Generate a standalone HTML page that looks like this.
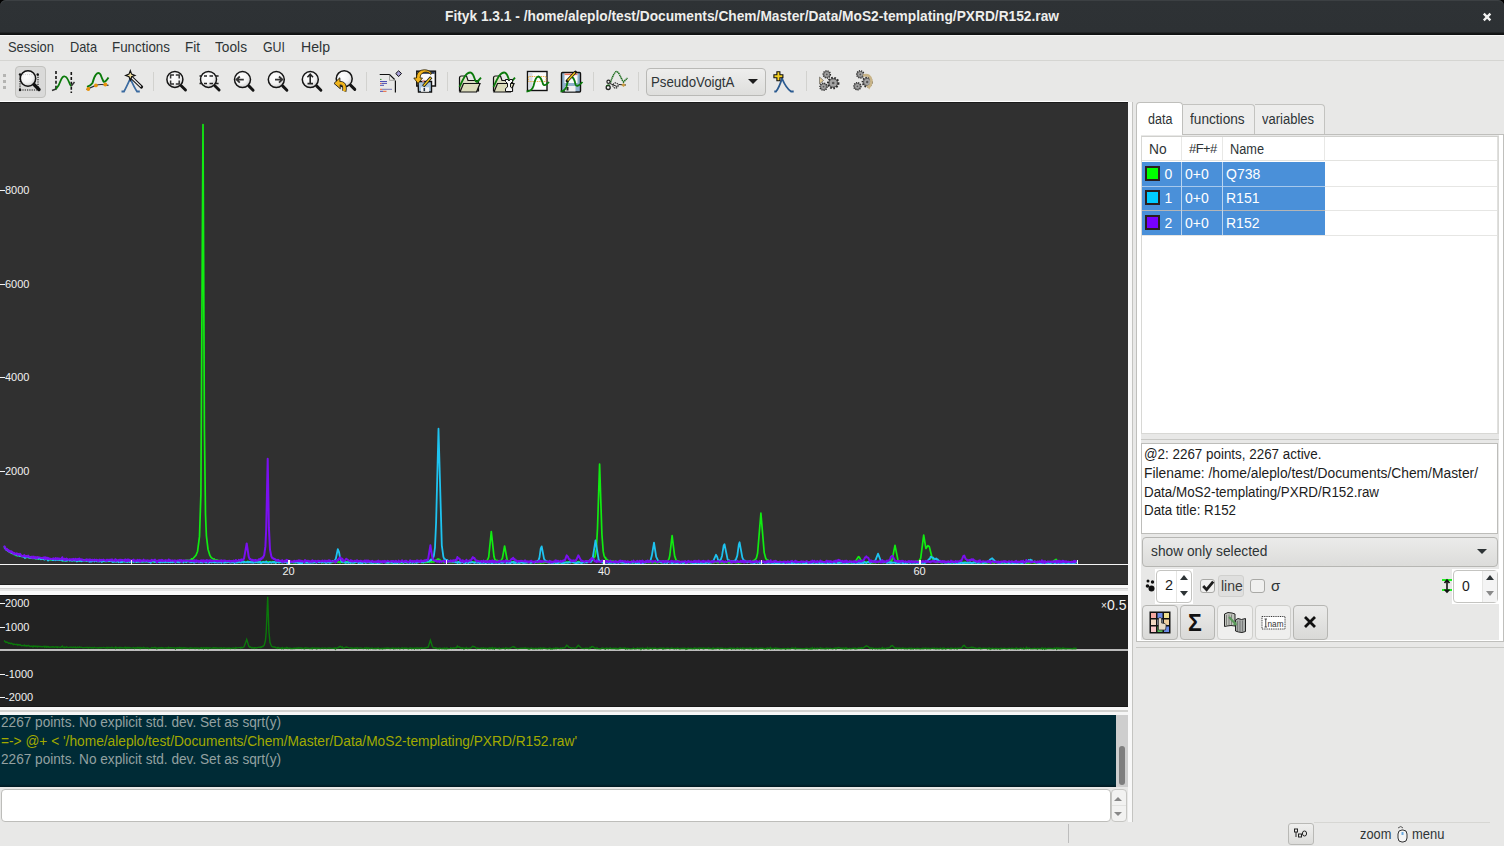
<!DOCTYPE html>
<html><head><meta charset="utf-8">
<style>
*{box-sizing:border-box}
html,body{margin:0;padding:0}
body{width:1504px;height:846px;overflow:hidden;position:relative;background:#e8e8e7;font-family:"Liberation Sans",sans-serif;color:#2e3436}
.a{position:absolute}
.t{position:absolute;white-space:nowrap;line-height:1}
</style></head><body>
<!-- title bar -->
<div class="a" style="left:0;top:0;width:1504px;height:10px;background:#000"></div>
<div class="a" style="left:0;top:0;width:1504px;height:35px;background:linear-gradient(#2e3235 0,#2d3134 32px,#161818 33px,#0e1010 35px);border-radius:6px 6px 0 0;box-shadow:inset 0 1px 0 #3c4043"></div>
<div class="t" style="left:445px;top:9.3px;font-size:14px;font-weight:bold;color:#eeeeec;transform:scaleX(0.9816);transform-origin:0 0">Fityk 1.3.1 - /home/aleplo/test/Documents/Chem/Master/Data/MoS2-templating/PXRD/R152.raw</div>
<svg class="a" style="left:1480px;top:10px" width="14" height="14" viewBox="0 0 14 14"><path d="M3.8 3.6 L10.4 10.4 M10.4 3.6 L3.8 10.4" stroke="#f2f2f2" stroke-width="2.3"/></svg>
<!-- menubar -->
<div class="a" style="left:0;top:35px;width:1504px;height:1px;background:#f7f7f7"></div>
<div class="a" style="left:0;top:60px;width:1504px;height:1px;background:#d5d5d2"></div>
<div class="t" style="left:8px;top:40px;font-size:14.2px;transform:scaleX(0.9112);transform-origin:0 0">Session</div>
<div class="t" style="left:70px;top:40px;font-size:14.2px;transform:scaleX(0.9009);transform-origin:0 0">Data</div>
<div class="t" style="left:112px;top:40px;font-size:14.2px;transform:scaleX(0.9428);transform-origin:0 0">Functions</div>
<div class="t" style="left:185px;top:40px;font-size:14.2px;transform:scaleX(0.9514);transform-origin:0 0">Fit</div>
<div class="t" style="left:215px;top:40px;font-size:14.2px;transform:scaleX(0.9660);transform-origin:0 0">Tools</div>
<div class="t" style="left:263px;top:40px;font-size:14.2px;transform:scaleX(0.8718);transform-origin:0 0">GUI</div>
<div class="t" style="left:301px;top:40px;font-size:14.2px;transform:scaleX(0.9936);transform-origin:0 0">Help</div>
<!-- toolbar -->
<div class="a" style="left:0;top:101px;width:1128px;height:1px;background:#fdfdfd"></div>
<div class="a" style="left:15px;top:66px;width:31px;height:32px;background:#dadad9;border:1px solid #c2c2bf;border-radius:4px"></div>
<div class="a" style="left:646px;top:68px;width:120px;height:28px;background:linear-gradient(#eeeeed,#dededc);border:1px solid #b9b9b6;border-radius:4px"></div>
<div class="t" style="left:650.5px;top:75px;font-size:14px;color:#2e3436;transform:scaleX(0.9481);transform-origin:0 0">PseudoVoigtA</div>
<div class="a" style="left:748px;top:79px;width:0;height:0;border-left:5px solid transparent;border-right:5px solid transparent;border-top:5px solid #1c1c1c"></div>
<svg class="a" style="left:0;top:60px" width="900" height="42" viewBox="0 60 900 42">
<defs>
<radialGradient id="glass" cx="0.4" cy="0.35" r="0.7"><stop offset="0" stop-color="#ffffff"/><stop offset="0.6" stop-color="#f2f2f2"/><stop offset="1" stop-color="#c8c8c8"/></radialGradient>
<linearGradient id="fold" x1="0" y1="0" x2="0" y2="1"><stop offset="0" stop-color="#f0f0dc"/><stop offset="1" stop-color="#b8b89a"/></linearGradient>
<g id="mag"><circle cx="0" cy="0" r="8" fill="url(#glass)" stroke="#151515" stroke-width="1.5"/><path d="M6.3 6.3 L10.6 10.6" stroke="#151515" stroke-width="2.9" stroke-linecap="round"/></g>
<g id="gear"><circle r="3.5" fill="#8a8a8a" stroke="#2a2a2a" stroke-width="1.6" stroke-dasharray="1.1 1.0"/><circle r="2.8" fill="#a4a4a4" stroke="#444" stroke-width="0.5"/><circle r="0.9" fill="#555"/></g>
</defs>
<!-- grip -->
<g fill="#b4b4b2"><rect x="3" y="74" width="3" height="3"/><rect x="3" y="80" width="3" height="3"/><rect x="3" y="86" width="3" height="3"/></g>
<!-- separators -->
<g fill="#d2d2cf"><rect x="153" y="72" width="1" height="19"/><rect x="366" y="72" width="1" height="19"/><rect x="447" y="72" width="1" height="19"/><rect x="593" y="72" width="1" height="19"/><rect x="638" y="72" width="1" height="19"/><rect x="806" y="71" width="1" height="20"/></g>
<!-- icon1 zoom box -->
<g stroke="#111" stroke-width="1.1" stroke-dasharray="1.2 1.1" fill="none"><path d="M20 74 L20 90 L38 90 L38 74"/></g>
<g fill="#111"><circle cx="20" cy="74.5" r="1.2"/><circle cx="37.7" cy="74.5" r="1.2"/><circle cx="20" cy="90" r="1.2"/></g>
<circle cx="28" cy="78.5" r="7.7" fill="url(#glass)" stroke="#111" stroke-width="1.55"/><path d="M23 74.6 H33" stroke="#bbb" stroke-width="0.6" stroke-dasharray="1 1"/>
<path d="M34 84.5 L39 89.5" stroke="#111" stroke-width="3.4" stroke-linecap="round"/>
<!-- icon2 range -->
<g stroke="#151515" stroke-width="1.6" stroke-dasharray="3 1.9"><path d="M56 71 V89"/><path d="M71.3 72 V93"/></g>
<path d="M55.5 89.5 Q59 86 60.5 81 Q62.5 75.5 65 76.5 Q67 77 69 82 Q70.5 86 71.3 86" stroke="#0a7a0a" stroke-width="1.8" fill="none"/>
<path d="M71.3 86 L74.5 82" stroke="#333" stroke-width="1.5"/><path d="M52 90.5 L56 89" stroke="#333" stroke-width="1.6"/>
<!-- icon3 baseline -->
<path d="M87 86.8 Q91 85.5 92.5 83 Q94 77 96 74.5 Q98.5 71.5 100.5 74.5 Q102 78.5 103.5 81.5 Q105 83 108.5 77.5" stroke="#0a7a0a" stroke-width="1.9" fill="none"/>
<path d="M86.5 89.5 L95.8 85.4 Q100 83.6 108.5 85.3" stroke="#2a2a3a" stroke-width="1.2" fill="none"/>
<g fill="#e8920a"><circle cx="88.3" cy="89" r="1.9"/><circle cx="95.9" cy="85.4" r="1.9"/><circle cx="105.3" cy="84.5" r="1.9"/></g>
<!-- icon4 wand peak -->
<path d="M121.5 91.5 L124 91.5 Q126 88 130.3 78.5 Q134.5 88 137 91.5 L139.8 91.5" stroke="#3a6aa0" stroke-width="1.8" fill="none"/>
<path d="M131.5 77.5 L141.5 87" stroke="#111" stroke-width="3.2" stroke-linecap="round"/><path d="M131.8 77.8 L141 86.6" stroke="#f4f4f4" stroke-width="1.3"/>
<path d="M130.3 70.5 L131.6 74.1 L135 75.4 L131.6 76.7 L130.3 80.3 L129 76.7 L125.6 75.4 L129 74.1 Z" fill="#f5e3a0" stroke="#111" stroke-width="1.1"/>
<!-- zoom icons -->
<use href="#mag" x="174.9" y="79.4"/>
<g stroke="#333" stroke-width="1.5" fill="none"><path d="M170.6 78.4 V75 H174 M175.8 75 H179.2 V78.4 M170.6 80.6 V84 H174 M175.8 84 H179.2 V80.6"/></g>
<use href="#mag" x="208.5" y="79.4"/>
<g stroke="#222" stroke-width="1.7"><path d="M199.5 76 H202 M204 76 H207 M209.5 76 H213 M216 76 H218.6 M199.5 83.5 H202 M204 83.5 H207 M209.5 83.5 H213 M216 83.5 H218.6"/></g>
<use href="#mag" x="242.5" y="79.6"/>
<path d="M243.8 79.6 H237 M239.8 76.5 L236.5 79.6 L239.8 82.7" stroke="#333" stroke-width="1.8" fill="none"/>
<use href="#mag" x="276.3" y="79.6"/>
<path d="M275 79.6 H281.8 M279 76.5 L282.3 79.6 L279 82.7" stroke="#333" stroke-width="1.8" fill="none"/>
<use href="#mag" x="310.3" y="79.6"/>
<path d="M310.2 74.5 V83.3 M307.4 77.2 L310.2 74.2 L313 77.2 M307.5 83.6 H313" stroke="#222" stroke-width="1.6" fill="none"/>
<use href="#mag" x="344.2" y="78.8"/>
<path d="M338 83.4 Q343.5 82.2 344.4 86.6 Q344.8 89.5 344.2 91.3" fill="none" stroke="#1a1a1a" stroke-width="4.4"/><path d="M334 83.4 L339.8 77.8 L340.3 88.8 Z" fill="#f0b41c" stroke="#1a1a1a" stroke-width="0.9" stroke-linejoin="round"/><path d="M338 83.4 Q343.5 82.2 344.4 86.6 Q344.8 89.5 344.2 91.3" fill="none" stroke="#f0b41c" stroke-width="2.8"/>
<!-- doc icon -->
<path d="M379.7 74.5 H389.6 L394.6 79.5 M395.4 80.5 V92.5" stroke="#111" stroke-width="1.2" fill="none"/>
<path d="M389.5 74.5 V80.3 H395.4" stroke="#777" stroke-width="0.6" fill="none"/>
<g stroke-width="0.9"><path d="M380 79.4 H381.5" stroke="#2a8a2a"/><path d="M380 81.5 H387" stroke="#3a3aaa"/><path d="M380 83.4 H381.5" stroke="#e85020"/><path d="M381.5 83.4 H387" stroke="#3a3aaa"/><path d="M380 85.3 H384" stroke="#3a3aaa"/><path d="M380 89.3 H382" stroke="#e85020"/><path d="M382 89.3 H392" stroke="#6a6aaa"/><path d="M380 91.3 H383" stroke="#3a3aaa"/><path d="M383 91.3 H386.5" stroke="#e85020"/></g>
<path d="M398.6 70.8 L401.5 73.5 L398.6 76.6 L395.8 73.5 Z" fill="#a8a0d8" stroke="#111" stroke-width="1"/>
<!-- session icon -->
<rect x="416.8" y="71.2" width="18.6" height="14.8" fill="#fafafa" stroke="#111" stroke-width="1.5"/>
<rect x="417.5" y="71.8" width="17.2" height="2" fill="#2a3a5a"/>
<path d="M418 81.5 H431.5 V92 H418.5 Z" fill="#a8c4dc" stroke="#111" stroke-width="1.4"/>
<rect x="421" y="87.3" width="8" height="4.5" fill="#f4f4f4"/><rect x="423.5" y="88" width="1.6" height="3.2" fill="#234"/>
<path d="M431 74.5 Q427 70.5 422.5 73 Q420 74.5 420 78 L422.5 78 L418 83.5 L413.8 78 L416.5 78 Q416.5 72 421.5 70.2 Q427.5 68.5 431.5 73 Z" fill="#f2b41c" stroke="#2a2000" stroke-width="0.8"/>
<path d="M423.2 86.3 L431.2 77.3" stroke="#111" stroke-width="3"/><path d="M423.6 85.8 L430.8 77.8" stroke="#f2c81a" stroke-width="1.4"/><path d="M422.5 82 L424.5 80" stroke="#e89090" stroke-width="1.6"/>
<!-- folder1 -->
<g id="folder">
<path d="M459.5 91 V78 Q459.5 76 461.5 76 H466.5 L468 80.5 H478.5 V91 Z" fill="url(#fold)" stroke="#111" stroke-width="1.2"/>
<path d="M460 92 L463.5 83.5 H480 L476.5 92 Z" fill="#dcdcbc" stroke="#111" stroke-width="1.2"/>
</g>
<path d="M459.5 87 Q462.5 80 465 76 Q468 72 470.9 72.6 Q473 73.5 474.4 78 Q475.5 82 477 82 Q479 80 481 77.6" stroke="#0a7a0a" stroke-width="1.8" fill="none"/>
<use href="#folder" x="34"/>
<path d="M493.5 87 Q496.5 80 499 76 Q502 72 504.9 72.6 Q507 73.5 508.4 78 Q509.5 82 511 82 Q513 80 515 77.6" stroke="#0a7a0a" stroke-width="1.8" fill="none"/>
<path d="M505.5 79.5 H508 L509 81 L510 79.5 H512.5 V81.5 L510.5 83.5 V87 L512.5 88.5 V91.5 H505.5 V88.5 L507.5 87 V83.5 L505.5 81.5 Z" fill="#f6f6f6" stroke="#111" stroke-width="1"/>
<!-- chart icon -->
<rect x="527.5" y="71.5" width="19.5" height="19" fill="#fbfbfb" stroke="#111" stroke-width="1.4"/>
<rect x="528.5" y="72.5" width="4" height="16" fill="#d8dce4"/>
<rect x="528.5" y="76.5" width="17.5" height="5" fill="none" stroke="#e8a020" stroke-width="0.9" stroke-dasharray="1 0.8"/>
<path d="M526.5 91.5 Q532 91 533.5 86 Q535.5 76.5 538.5 76.5 Q541 77 543 84 Q544.5 87 549 82" stroke="#0a7a0a" stroke-width="1.8" fill="none"/>
<!-- floppy icon -->
<rect x="561.5" y="72.5" width="19" height="19.5" rx="1" fill="#8fb0cc" stroke="#111" stroke-width="1.4"/>
<rect x="564.5" y="73.5" width="13" height="9.5" fill="#fafafa"/><rect x="564.5" y="73.5" width="13" height="1.6" fill="#f07a60"/>
<rect x="565" y="86" width="10.5" height="5.5" fill="#f0f0f0"/><rect x="566.5" y="87" width="2" height="3.5" fill="#222"/>
<path d="M560.5 91.5 Q565 91 566.5 86.5 Q568.5 77 571.5 77 Q574 77 575.5 84.5 Q577 88 582.5 82" stroke="#0a7a0a" stroke-width="1.8" fill="none"/>
<path d="M567 81 L575.5 72" stroke="#111" stroke-width="2.8" stroke-linecap="round"/><path d="M567.6 80.4 L575 72.6" stroke="#f2c81a" stroke-width="1.4"/>
<!-- scissors chart -->
<path d="M610.5 82.5 Q612.5 76 615 72.5 Q617 70 619.5 74.5 Q621 78 623.5 82 L627.5 78" stroke="#1a6a1a" stroke-width="1.5" fill="none" stroke-dasharray="1.4 0.5"/>
<circle cx="608.5" cy="81.8" r="1.6" fill="#f4f4f4" stroke="#222" stroke-width="1.2"/>
<circle cx="608.2" cy="87.5" r="2" fill="#f4f4f4" stroke="#222" stroke-width="1.3"/><path d="M606 86 Q607.5 84.5 610 85" stroke="#1a6a1a" stroke-width="1"/>
<circle cx="615.5" cy="85.5" r="2.6" fill="none" stroke="#333" stroke-width="1.2" stroke-dasharray="1.5 0.7"/>
<path d="M610 83.5 L617 86.5 M618.5 84.5 L626 85" stroke="#222" stroke-width="1"/>
<rect x="622" y="83.5" width="3" height="3" transform="rotate(45 623.5 85)" fill="#c89a40"/>
<!-- add peak -->
<path d="M774.3 91.5 L776 91.5 Q779 88 782 78.5 Q786 88 791 91.5 L793.7 91.5" stroke="#2a5a90" stroke-width="1.8" fill="none"/>
<path d="M776.9 71.8 H779.9 V74.8 H782.9 V77.8 H779.9 V80.8 H776.9 V77.8 H773.9 V74.8 H776.9 Z" fill="#f5d020" stroke="#111" stroke-width="1.1"/>
<!-- gears 1 -->
<path d="M819.5 77 L823.5 80.5 L819.5 84 Z" fill="#e0c890" stroke="#555" stroke-width="0.6"/>
<use href="#gear" x="826.8" y="74.4"/><use href="#gear" x="823.5" y="86.7"/>
<g transform="translate(833.2 83) scale(1.45)"><use href="#gear"/></g>
<!-- gears 2 -->
<use href="#gear" x="860.3" y="74.4"/><use href="#gear" x="857.4" y="86.3"/>
<g transform="translate(867.2 82) scale(1.3)"><use href="#gear"/></g>
<path d="M863 75.5 Q870.5 73.5 871.5 81 Q871.5 85 868.5 87.5" fill="none" stroke="#c8b488" stroke-width="2.6"/><path d="M866 86 L869.5 89.5 L870.5 84.5 Z" fill="#c8b488"/>
</svg>

<!-- main plot -->
<div class="a" style="left:0;top:102px;width:1128px;height:483px;background:#303030;border-top:1px solid #1a1a1a;border-bottom:1px solid #202020"></div>

<!-- sash -->
<div class="a" style="left:0;top:585px;width:1128px;height:10px;background:linear-gradient(#f8f8f8 0,#f8f8f8 3px,#cfcfcf 3px,#cfcfcf 4px,#e6e6e6 4px,#e6e6e6 6px,#fafafa 6px)"></div>
<!-- residual plot -->
<div class="a" style="left:0;top:595px;width:1128px;height:112px;background:#222222;border-top:1px solid #141414;border-bottom:1px solid #181818"></div>
<div class="a" style="left:0;top:707px;width:1128px;height:8px;background:linear-gradient(#f8f8f8 0,#f8f8f8 3px,#d2d2d0 3px,#d2d2d0 5px,#f6f6f6 5px)"></div>
<!-- console -->
<div class="a" style="left:0;top:715px;width:1116px;height:72px;background:linear-gradient(#002b36 0,#002b36 69px,#001820 72px)"></div>
<div class="a" style="left:1116px;top:715px;width:12px;height:72px;background:#cecece"></div>
<div class="a" style="left:1119px;top:746px;width:6px;height:39px;background:#7e7e7e;border-radius:3px"></div>
<div class="t" style="left:1px;top:715px;font-size:14px;color:#93a1a1;transform:scaleX(0.9734);transform-origin:0 0">2267 points. No explicit std. dev. Set as sqrt(y)</div>
<div class="t" style="left:1px;top:733.5px;font-size:14px;color:#a2aa00;transform:scaleX(0.9803);transform-origin:0 0">=-&gt; @+ &lt; '/home/aleplo/test/Documents/Chem/Master/Data/MoS2-templating/PXRD/R152.raw'</div>
<div class="t" style="left:1px;top:752px;font-size:14px;color:#93a1a1;transform:scaleX(0.9734);transform-origin:0 0">2267 points. No explicit std. dev. Set as sqrt(y)</div>
<!-- input -->
<div class="a" style="left:1px;top:789px;width:1110px;height:33px;background:#fff;border:1px solid #bdbdba;border-radius:4px"></div>
<div class="a" style="left:1111px;top:789px;width:16px;height:33px;background:#f2f2f1;border:1px solid #c6c6c3;border-radius:4px"></div>

<svg class="a" style="left:0;top:0" width="1128" height="846" viewBox="0 0 1128 846">
<g fill="none" stroke-linejoin="round">
<polyline stroke="#11ec11" stroke-width="1.7" points="4.1,547.4 8.3,551.4 10.2,552.6 11.1,552.6 12.6,554.0 15.4,554.5 16.4,555.6 17.3,555.2 19.7,556.0 20.1,555.6 20.6,556.3 21.6,556.0 23.9,557.1 24.9,556.5 25.3,557.4 25.8,556.8 26.8,557.4 27.2,556.7 28.2,557.7 31.5,557.4 32.0,558.1 33.9,558.5 35.8,558.0 36.2,558.7 37.2,558.3 37.7,559.1 39.1,558.3 40.5,558.9 41.4,558.4 41.9,559.0 44.3,559.4 45.7,558.8 49.0,559.2 49.5,559.7 50.0,559.3 50.9,560.0 52.8,558.9 53.3,559.8 56.1,559.5 57.1,560.1 59.4,560.1 59.9,559.6 62.3,560.6 63.2,559.9 63.7,560.6 64.2,559.8 64.6,560.6 65.1,559.9 67.0,560.6 67.9,559.8 69.8,560.5 70.3,560.0 72.7,560.7 73.1,560.0 77.9,560.9 78.8,560.1 79.8,560.8 80.7,560.2 81.2,561.0 81.7,560.6 82.6,561.1 83.1,560.4 86.9,561.0 87.3,560.3 87.8,560.9 92.1,560.5 94.0,561.2 94.4,560.6 97.8,561.0 98.2,560.5 98.7,561.3 100.6,560.4 102.0,561.5 102.5,560.8 103.0,561.3 103.9,560.8 104.9,561.6 105.3,561.0 107.7,561.5 108.2,561.1 109.1,561.5 109.6,560.9 113.4,561.4 114.8,560.6 115.3,561.6 115.7,560.9 117.2,561.6 118.1,561.0 119.5,561.3 120.0,560.9 120.9,561.8 121.4,561.4 122.4,562.2 123.3,560.9 124.3,561.6 125.2,561.0 129.0,561.6 130.4,561.0 130.9,561.7 131.8,561.3 132.3,561.7 132.8,560.9 133.7,561.5 134.7,561.2 135.1,562.1 135.6,561.3 137.0,561.7 139.9,561.0 141.3,561.9 141.8,561.0 144.6,561.5 146.0,561.0 147.9,561.6 148.4,561.0 150.3,561.8 151.2,561.2 153.6,561.9 156.4,561.0 156.9,561.5 158.8,561.7 159.7,560.9 160.2,561.5 161.6,561.4 162.1,561.8 163.1,561.1 163.5,561.7 164.0,561.1 165.0,561.4 165.9,560.9 167.3,561.8 168.3,561.0 169.2,561.7 173.9,561.4 174.9,560.8 176.3,561.7 176.8,561.1 177.3,561.8 178.2,561.0 179.6,561.6 181.5,560.4 182.9,561.3 185.3,561.0 185.8,560.4 190.0,560.2 191.9,558.8 192.4,559.3 196.0,555.3 197.6,551.2 199.5,536.4 200.9,494.4 203.0,124.5 204.4,428.8 205.5,514.1 206.4,535.8 208.0,549.2 209.9,555.4 211.3,557.6 213.7,559.2 214.2,558.8 214.6,559.7 217.5,560.2 218.4,560.8 219.9,560.5 221.3,561.4 221.7,560.8 222.7,561.6 223.6,560.9 224.1,561.6 227.4,561.2 229.8,562.0 230.3,561.0 230.7,561.6 232.6,561.6 233.1,561.1 234.0,562.1 235.9,561.5 236.9,562.1 237.8,561.3 238.3,562.5 238.8,561.6 239.3,562.1 239.7,561.5 241.1,562.2 242.1,561.4 244.0,562.4 244.9,561.8 246.4,562.2 248.2,561.4 249.2,562.1 251.6,562.2 252.0,561.7 256.8,562.3 257.2,561.9 259.1,562.6 259.6,561.9 263.9,562.3 266.2,561.9 266.7,562.5 267.2,561.9 270.0,561.8 271.4,562.5 272.4,561.7 273.8,562.5 274.3,561.8 275.2,562.8 275.7,561.9 276.6,562.4 277.6,561.7 278.1,562.2 279.0,561.6 280.9,562.4 285.6,561.8 288.0,562.6 288.5,561.9 291.8,562.7 292.7,561.9 293.7,562.3 294.6,561.9 295.1,562.9 295.6,562.2 297.0,561.6 299.4,562.3 300.8,561.6 301.3,562.2 303.6,561.7 304.1,562.4 306.0,561.9 306.5,562.6 307.4,562.1 308.3,562.6 308.8,561.9 310.2,562.3 311.7,561.9 312.1,562.4 314.0,562.0 315.0,562.4 316.4,561.9 317.3,562.3 318.3,561.6 319.2,562.2 320.2,561.8 321.1,562.5 322.1,562.1 323.0,562.7 324.0,562.0 328.2,562.5 328.7,561.9 329.6,562.4 331.1,562.0 331.5,562.7 333.0,561.5 333.9,562.2 334.9,561.6 335.3,562.3 336.3,561.9 337.7,562.4 338.6,561.7 340.1,562.8 340.5,562.0 342.0,562.0 342.9,562.7 343.4,562.1 345.3,562.3 345.7,562.9 346.2,561.9 347.6,561.7 348.6,562.7 350.5,562.2 350.9,562.8 351.4,562.1 351.9,562.7 352.4,562.2 355.2,562.7 356.6,561.7 358.0,562.4 358.5,561.9 361.8,562.6 362.8,561.6 363.2,562.3 364.7,562.1 365.1,562.6 367.5,561.8 368.0,562.5 368.9,562.4 369.4,561.9 369.9,562.8 372.2,561.9 372.7,562.7 373.2,562.1 374.1,562.5 374.6,562.1 375.6,562.9 378.4,561.8 379.3,562.7 381.2,562.2 382.2,562.8 382.7,562.1 385.5,561.9 387.4,562.7 388.8,562.2 389.3,562.7 389.7,561.8 391.2,562.8 394.0,562.1 394.5,562.5 395.9,561.6 396.4,562.6 397.8,562.1 398.3,562.6 400.6,562.4 401.1,562.9 402.5,562.3 403.5,562.8 404.4,562.1 407.3,562.6 408.2,561.9 410.6,562.5 411.5,561.6 412.5,562.4 413.9,562.0 414.8,562.8 416.7,561.9 418.1,562.6 419.1,561.7 420.5,562.3 421.0,561.8 421.5,562.6 422.9,562.1 425.7,562.6 426.7,562.0 427.1,562.5 428.1,562.0 429.5,562.5 430.4,561.5 431.4,562.1 433.3,561.4 433.8,562.0 434.2,561.2 438.0,558.9 439.0,560.0 439.4,559.5 441.8,561.6 443.2,561.6 443.7,562.4 444.2,561.7 445.1,562.4 445.6,561.8 446.5,562.6 448.0,561.9 448.4,562.4 453.2,562.4 456.5,561.7 457.0,562.5 458.8,561.8 459.3,562.9 460.3,562.1 463.6,562.0 464.0,562.9 464.5,562.1 465.0,562.6 465.5,562.0 468.3,562.7 469.7,562.0 478.2,562.2 478.7,561.5 480.6,562.2 481.6,561.8 483.5,562.2 483.9,561.7 484.4,562.1 484.9,561.3 487.4,560.3 488.7,557.0 491.3,531.6 494.0,556.6 494.8,559.3 496.7,560.8 497.2,560.4 497.6,561.6 498.6,560.9 500.5,561.3 502.4,558.4 504.6,546.0 507.1,559.6 508.1,561.4 508.5,560.9 509.0,561.5 510.0,561.1 510.9,562.2 511.8,561.6 513.7,562.6 514.2,561.7 514.7,562.8 518.0,561.9 518.5,562.9 518.9,562.3 520.8,562.5 521.8,562.1 522.7,562.5 523.7,561.7 524.2,562.7 525.1,561.6 526.5,562.4 528.4,562.1 529.8,562.7 531.7,562.1 535.0,562.2 535.5,562.7 536.0,562.0 536.9,562.6 538.8,562.6 539.3,562.1 540.2,563.0 540.7,562.6 541.2,562.9 542.1,562.1 543.1,562.8 544.0,561.9 545.0,562.4 545.9,561.7 546.9,562.3 549.7,562.6 551.1,561.7 551.6,562.6 553.5,562.1 554.9,562.8 555.9,562.2 556.8,562.6 558.2,562.2 559.6,562.9 560.6,561.9 561.1,563.0 562.0,562.3 564.4,562.4 564.9,562.9 565.3,562.4 567.7,562.1 568.2,562.4 570.1,561.9 573.8,562.7 575.3,562.0 577.2,562.4 579.0,561.6 580.0,562.5 581.4,562.3 581.9,561.6 582.8,562.4 583.8,561.5 584.7,562.0 588.0,561.0 589.0,561.6 590.9,560.3 591.8,560.3 595.1,556.2 596.4,548.4 597.5,528.3 599.6,464.1 601.9,534.2 603.2,551.4 604.1,555.9 605.1,557.8 605.6,557.7 606.0,559.2 606.5,559.1 607.3,560.0 609.8,561.2 613.1,561.2 614.1,562.2 615.0,562.3 615.5,561.4 616.0,562.2 617.4,561.5 620.2,562.3 621.2,561.7 621.6,562.6 622.1,562.1 622.6,562.4 624.5,562.0 625.0,562.7 625.4,561.9 625.9,562.4 626.8,562.2 627.3,563.0 628.7,561.9 630.2,562.7 631.1,561.8 632.5,562.8 633.5,561.6 635.4,562.6 635.8,562.0 636.3,562.7 637.7,562.1 639.6,562.7 640.1,562.4 643.4,562.8 644.8,561.8 645.3,562.8 646.3,562.1 647.2,562.5 647.7,561.9 648.6,562.7 653.3,562.2 653.8,562.8 654.8,562.2 655.7,562.9 657.1,561.8 657.6,562.9 658.1,561.5 658.6,562.6 659.0,562.0 660.9,562.5 661.4,561.9 662.3,562.8 662.8,561.2 664.2,562.1 665.2,561.2 667.5,561.4 669.0,558.9 669.8,555.5 672.1,535.6 674.6,555.9 676.1,560.1 678.0,561.7 678.9,561.0 679.9,562.0 682.7,562.0 684.1,562.7 686.9,562.2 687.4,562.7 688.4,562.6 689.3,561.9 690.3,562.5 690.7,562.0 691.2,562.8 691.7,562.0 692.6,563.2 693.1,561.7 694.0,562.7 695.5,562.4 695.9,562.8 697.8,562.1 698.3,562.4 698.8,561.8 699.3,562.6 699.7,562.4 700.2,563.0 701.1,562.1 701.6,562.7 704.9,562.2 706.4,562.7 708.2,561.7 710.1,562.7 712.5,562.3 713.9,562.8 714.4,562.0 715.3,562.0 716.8,562.5 717.7,561.7 718.2,562.8 719.1,562.0 720.6,562.1 721.0,562.6 724.3,562.3 724.8,562.8 725.3,561.9 726.7,562.5 728.1,562.3 728.6,562.9 729.5,561.6 730.0,562.9 730.5,562.1 731.4,562.4 731.9,562.0 732.4,562.7 733.3,562.0 735.2,562.5 735.7,561.9 736.2,562.6 736.6,562.1 737.1,562.7 737.6,562.1 738.5,563.1 739.0,562.3 739.5,562.6 740.4,561.8 740.9,562.6 741.8,561.8 743.7,562.4 744.7,561.8 747.1,562.2 747.5,561.4 748.5,562.2 749.4,561.6 751.8,561.8 755.1,559.7 756.4,558.0 757.6,553.2 760.9,513.2 764.2,552.6 765.7,558.2 766.9,559.9 768.3,560.4 768.8,561.5 773.6,562.1 774.5,561.5 775.4,562.2 777.3,561.9 777.8,562.4 778.8,561.9 780.2,562.6 781.1,562.4 781.6,561.7 782.1,562.4 783.0,562.5 784.9,561.8 787.3,562.8 788.7,562.5 789.2,563.0 789.6,562.2 792.0,562.3 792.5,562.8 793.4,562.4 795.3,562.7 796.3,562.1 796.7,562.8 797.2,562.0 799.6,563.0 801.9,562.5 802.4,563.1 802.9,562.4 803.4,562.9 809.0,562.4 809.5,563.1 810.0,562.2 810.9,562.7 811.9,562.2 814.7,562.6 815.2,562.1 816.6,562.8 817.6,562.3 818.0,562.9 818.5,562.3 819.5,562.5 819.9,563.1 820.9,562.3 821.8,562.5 822.3,563.2 822.8,562.3 823.2,562.7 823.7,562.3 824.2,563.0 824.7,562.3 826.6,562.7 827.0,561.9 827.5,562.8 828.9,562.8 829.9,562.0 830.8,563.0 831.3,562.2 834.6,562.9 835.1,562.3 835.6,562.7 836.0,561.9 837.0,562.7 837.9,562.0 838.9,562.9 839.8,562.1 840.3,562.7 841.2,562.2 842.2,562.8 844.5,562.2 845.5,562.9 846.4,562.2 848.3,562.7 848.8,562.2 849.7,563.0 850.2,562.1 851.6,562.7 853.5,562.0 854.0,562.7 854.5,561.7 855.1,561.9 858.4,556.7 859.2,557.0 861.6,561.6 862.5,561.4 863.5,562.1 863.9,561.6 864.9,562.5 865.4,562.1 865.8,562.7 866.8,562.0 867.3,562.6 869.2,562.7 869.6,562.3 870.1,563.0 872.0,562.4 872.5,562.8 872.9,562.3 875.8,562.7 877.7,562.0 878.6,562.7 879.1,562.2 884.3,562.1 884.8,562.5 885.2,561.8 885.7,562.3 887.1,562.2 887.6,561.6 888.6,562.4 890.0,561.1 891.4,561.1 892.2,559.5 895.0,545.3 898.0,560.4 900.4,561.9 903.2,561.8 905.6,562.5 908.0,562.4 908.4,561.7 909.9,562.2 910.3,561.6 911.3,562.2 912.7,561.7 913.2,562.1 913.6,561.5 914.1,562.3 914.6,561.8 915.1,562.2 915.5,561.3 916.0,561.9 917.4,561.1 917.9,561.6 918.8,561.2 920.7,558.2 923.7,535.2 925.9,548.5 928.0,545.6 929.3,546.6 932.1,557.8 933.8,561.0 935.4,562.1 935.9,561.8 936.8,562.3 937.3,561.8 937.8,562.3 939.2,562.0 940.6,562.5 941.1,561.8 942.0,562.6 943.9,561.9 945.8,562.8 947.2,561.7 948.2,563.1 949.1,562.4 952.0,562.8 952.4,562.3 953.9,562.9 954.8,562.3 955.3,563.0 956.2,562.3 957.6,562.9 958.1,562.2 959.5,563.0 961.0,562.1 962.4,562.7 963.8,562.4 964.3,563.0 965.2,562.2 965.7,562.9 966.6,562.5 967.6,563.2 968.1,562.3 969.0,562.7 969.5,562.0 971.4,562.9 973.3,562.7 973.7,562.1 976.6,562.6 977.1,562.1 977.5,562.9 978.5,563.0 979.9,562.2 980.4,562.8 982.7,562.6 983.2,563.1 983.7,562.6 985.6,563.0 986.0,562.1 986.5,563.0 987.0,562.2 988.4,562.9 989.4,562.1 989.8,562.9 991.7,562.0 992.2,562.8 992.7,562.4 993.1,563.0 993.6,562.0 994.6,563.2 996.0,562.1 996.5,562.7 997.9,562.2 998.3,562.6 1001.2,562.9 1001.7,562.3 1002.1,563.0 1002.6,562.3 1004.0,562.8 1006.4,562.3 1007.8,563.1 1008.3,562.4 1009.2,562.7 1009.7,562.3 1010.7,563.4 1012.5,561.9 1013.0,562.8 1015.4,562.3 1015.9,562.9 1016.3,562.2 1016.8,562.9 1017.8,562.3 1018.7,562.9 1020.6,562.3 1021.1,563.0 1021.5,562.5 1025.3,562.1 1025.8,563.1 1026.3,562.3 1028.2,563.1 1029.6,562.5 1030.1,563.0 1030.5,562.2 1034.8,563.0 1036.7,562.1 1038.1,563.1 1041.9,562.2 1042.4,562.8 1043.8,562.3 1044.3,562.9 1045.7,563.0 1046.6,561.8 1047.1,562.8 1047.6,562.3 1048.5,562.8 1049.9,562.6 1050.4,561.9 1050.9,562.9 1054.7,560.2 1055.1,560.6 1056.1,559.3 1057.5,561.4 1058.9,562.1 1059.4,561.9 1060.8,562.9 1061.3,562.5 1062.7,562.7 1063.2,562.0 1063.7,562.9 1065.5,562.0 1066.5,562.8 1067.4,562.3 1067.9,562.8 1068.4,562.2 1069.3,562.6 1070.8,562.2 1071.2,562.9 1071.7,562.3 1074.5,563.1 1076.0,562.1 1076.8,562.4"/>
<polyline stroke="#1ec3f0" stroke-width="1.8" points="4.1,546.3 5.9,549.2 7.8,550.8 9.3,551.0 11.6,553.0 13.5,553.1 14.0,554.4 16.8,554.5 17.8,555.5 18.2,554.7 20.1,556.0 20.6,555.4 21.6,556.4 23.9,556.6 24.9,558.1 25.3,556.8 25.8,557.6 26.8,556.7 30.1,558.0 30.6,557.2 31.0,557.7 33.9,557.8 35.3,558.5 35.8,557.7 36.2,558.5 37.2,557.9 38.6,558.7 39.1,557.7 41.0,559.3 41.9,558.7 44.7,559.6 46.2,558.1 48.1,560.6 49.5,559.1 50.9,559.4 51.8,559.0 52.3,560.0 53.3,560.2 53.7,559.1 55.2,560.2 55.6,559.7 58.0,560.0 58.5,559.6 60.4,560.2 60.8,559.7 62.7,560.6 63.2,559.8 63.7,560.5 64.6,560.0 65.1,560.8 67.0,560.7 67.5,560.0 69.8,560.6 70.8,560.2 72.2,560.8 73.1,560.3 74.1,560.8 75.0,559.6 75.5,560.7 76.5,560.4 76.9,561.5 77.4,560.5 77.9,560.9 78.4,560.1 79.3,560.9 81.2,560.7 81.7,561.2 83.1,560.0 84.0,560.7 85.4,560.2 86.4,560.9 88.3,560.8 89.2,561.7 89.7,561.2 90.2,561.7 90.7,560.9 91.6,561.6 92.1,560.7 93.0,560.9 94.0,560.3 94.4,561.5 94.9,560.6 96.3,560.7 96.8,561.3 98.7,561.1 99.2,561.6 100.1,560.9 101.1,561.0 101.5,561.8 103.9,560.8 106.3,561.4 106.7,560.8 111.0,561.2 111.5,560.8 112.4,562.1 112.9,560.8 113.8,561.8 114.8,561.7 115.3,560.6 116.2,561.9 117.6,560.7 118.6,562.2 119.0,561.4 120.5,562.2 121.4,560.8 121.9,562.1 122.4,561.0 122.8,561.7 123.3,560.6 124.3,561.5 124.7,561.1 125.7,561.7 126.1,561.2 127.1,562.2 127.6,560.7 128.0,561.6 129.0,561.4 129.5,562.1 131.8,561.1 132.3,561.7 133.2,561.3 133.7,562.0 134.2,561.5 134.7,561.9 135.1,561.2 136.6,562.1 138.0,561.3 138.9,561.9 139.9,561.4 140.3,561.9 140.8,561.2 142.7,561.9 144.1,561.1 145.1,561.8 145.6,561.1 146.0,561.7 147.4,561.6 147.9,560.8 148.9,562.2 149.3,561.2 150.8,562.8 151.2,561.4 153.1,561.1 154.5,562.0 155.5,561.4 156.4,562.3 156.9,561.6 157.9,562.1 158.3,561.6 159.3,562.4 160.2,561.1 160.7,562.4 161.6,561.6 162.6,562.3 164.0,561.5 165.0,562.3 165.9,561.4 166.8,562.1 168.3,561.5 168.7,562.3 169.2,561.8 170.2,562.3 172.1,561.7 172.5,562.4 174.4,561.5 175.4,562.5 176.8,561.1 177.7,562.2 178.2,561.6 179.2,562.5 179.6,560.9 180.1,561.8 181.5,561.3 183.4,562.5 184.4,561.4 186.3,562.2 186.7,561.4 189.6,561.7 190.0,562.4 191.0,561.2 191.5,562.2 192.9,561.6 193.8,562.6 194.3,561.8 194.8,562.5 195.7,561.8 196.2,562.1 197.1,560.8 198.6,562.4 201.4,562.1 202.8,562.6 203.3,561.9 204.7,561.7 205.2,562.2 205.7,561.8 206.1,562.6 206.6,561.2 208.0,562.5 208.5,561.9 209.0,562.8 209.9,561.8 210.9,562.3 211.3,561.7 211.8,562.5 213.7,561.9 214.2,562.5 214.6,561.4 215.1,562.3 215.6,561.4 216.1,562.5 216.5,561.9 217.5,562.6 218.4,561.9 218.9,562.6 219.4,561.7 219.9,562.4 221.3,561.9 221.7,562.8 222.2,561.5 224.1,562.8 225.1,561.9 226.0,562.6 227.0,561.6 227.4,562.3 228.4,561.7 230.3,562.7 233.6,562.1 234.5,563.0 235.0,562.4 236.9,562.7 239.3,562.0 240.2,562.6 241.1,561.5 241.6,562.5 242.1,561.8 243.0,561.6 243.5,562.5 244.0,561.5 244.9,562.3 246.8,562.3 247.3,561.7 248.2,562.6 248.7,561.9 249.7,561.8 250.1,562.6 250.6,561.8 251.6,561.6 252.0,562.7 252.5,562.2 253.5,562.8 254.4,561.8 255.3,562.5 255.8,561.9 256.8,561.9 257.2,562.5 258.2,561.9 259.1,562.5 260.1,561.7 261.0,563.2 262.9,562.0 265.8,562.5 266.2,561.3 267.2,562.6 268.6,562.9 270.0,562.0 271.4,562.8 273.3,561.9 273.8,562.5 274.3,561.9 275.2,562.3 275.7,563.1 277.1,561.8 278.5,562.5 279.5,562.6 280.0,561.9 282.8,562.6 283.3,561.7 284.2,562.3 284.7,561.8 286.1,562.1 287.5,563.2 288.0,561.9 288.5,563.0 288.9,562.1 289.9,562.7 291.8,561.7 293.2,562.6 293.7,562.1 297.5,562.6 297.9,562.1 298.4,563.0 299.4,561.8 299.8,563.4 300.8,562.1 301.3,563.0 301.7,561.4 302.2,563.3 302.7,561.8 305.0,562.7 305.5,562.1 306.0,562.8 306.9,562.0 307.4,562.8 308.3,562.3 308.8,562.9 309.3,561.9 310.2,562.9 310.7,562.4 312.6,562.6 313.1,562.0 313.6,562.6 314.0,562.0 314.5,562.4 315.0,562.0 316.4,562.8 317.8,561.6 319.2,562.4 320.7,561.8 321.6,562.6 322.5,561.8 323.5,562.4 324.0,561.9 325.9,563.0 326.3,561.9 326.8,562.7 328.2,561.9 329.6,562.8 330.1,562.1 330.6,562.6 331.1,561.9 332.0,561.9 332.5,561.0 333.0,561.5 334.4,561.0 335.8,558.7 337.8,549.1 339.1,552.4 340.1,558.2 341.5,561.5 342.0,562.1 342.9,561.5 344.8,561.8 345.3,562.9 345.7,562.2 346.7,562.6 348.1,562.3 348.6,562.8 349.5,561.5 350.5,562.9 351.4,562.1 352.4,562.8 352.8,562.0 353.8,562.8 355.2,562.1 357.6,562.1 358.5,563.0 359.0,562.1 359.5,562.9 361.4,562.6 361.8,561.9 362.3,563.4 363.2,561.6 363.7,562.4 365.1,561.7 365.6,562.9 368.0,562.2 371.3,562.9 371.8,561.9 372.7,563.0 373.2,562.0 373.7,562.7 374.1,562.3 376.0,562.7 377.0,561.7 377.4,563.3 378.4,562.3 379.3,563.0 379.8,561.6 380.3,562.6 380.8,561.7 381.7,562.4 383.1,562.0 384.5,562.4 385.0,562.0 386.0,562.8 386.9,562.3 388.3,562.8 389.7,562.1 390.2,562.5 390.7,561.7 391.2,562.5 391.6,561.3 393.5,563.5 395.0,561.7 395.4,563.0 395.9,561.7 396.4,562.5 396.8,562.2 397.3,563.4 397.8,562.4 398.7,562.2 399.7,562.9 400.2,562.1 402.1,562.0 403.5,562.9 403.9,561.9 407.3,562.7 407.7,561.6 409.2,562.9 410.6,562.1 412.5,562.8 413.9,561.4 414.4,562.6 415.3,562.0 416.3,562.8 418.6,561.8 420.5,562.2 422.4,561.8 423.3,562.5 425.2,561.2 425.7,561.7 426.7,561.1 427.6,561.6 429.0,561.4 430.0,560.3 430.4,560.6 430.9,559.5 431.4,560.0 432.8,558.7 433.9,555.7 435.0,547.3 436.1,522.4 438.5,428.7 441.8,545.3 443.4,556.9 444.6,559.6 445.1,559.1 446.1,560.1 447.0,559.8 447.5,561.2 448.0,560.6 449.9,561.5 450.3,561.0 453.2,561.8 453.6,561.3 455.1,562.4 457.0,562.1 457.4,563.0 458.4,562.0 459.3,562.6 459.8,561.8 460.7,562.8 462.6,561.9 463.6,562.8 465.0,562.5 465.5,563.1 466.4,562.2 468.3,563.0 469.3,562.0 470.2,562.6 470.7,562.0 471.1,562.6 471.6,561.9 474.5,563.0 474.9,562.4 476.4,562.7 476.8,562.0 477.8,562.8 478.7,562.0 479.7,563.2 481.6,562.0 482.0,563.0 482.5,562.3 483.0,562.8 483.5,562.0 483.9,562.6 484.4,562.2 485.3,563.1 486.8,562.9 487.7,562.1 488.7,562.9 489.6,562.8 490.1,562.0 492.0,563.3 493.4,562.4 494.8,562.7 495.3,562.0 495.8,562.9 497.6,562.7 498.6,561.9 499.1,563.2 499.5,562.6 501.4,562.7 501.9,562.2 502.4,562.8 504.7,562.2 506.6,563.0 508.1,562.5 509.0,563.0 510.0,562.4 510.4,563.2 510.9,562.0 511.4,562.6 512.3,562.2 513.3,562.8 513.7,561.8 514.2,563.0 515.2,562.3 515.6,563.0 517.1,561.7 517.5,562.9 518.5,562.3 519.4,563.0 521.3,562.1 523.2,563.0 524.2,562.5 525.6,562.8 526.5,561.7 527.0,562.7 528.4,562.0 530.8,562.8 531.3,562.1 531.7,562.6 534.1,561.8 534.6,562.5 536.9,561.2 537.4,562.0 537.9,560.7 538.3,560.7 539.5,557.4 540.7,548.6 541.7,546.4 544.0,558.7 545.9,561.6 546.9,561.1 548.8,562.5 549.2,561.7 549.7,562.7 551.1,562.5 551.6,561.7 552.1,563.3 552.5,562.3 553.5,562.9 554.9,561.9 555.9,563.1 556.8,562.0 557.8,563.4 558.2,562.0 558.7,562.6 559.2,562.1 560.6,562.7 561.5,562.0 562.0,563.4 563.0,561.9 563.9,563.1 564.4,562.6 567.2,562.5 567.7,562.9 569.1,562.1 570.1,562.6 572.4,561.9 576.2,563.3 577.2,562.3 578.1,563.0 578.6,562.2 579.0,562.7 580.0,562.4 581.4,563.3 583.8,562.1 584.7,562.6 586.1,562.1 587.1,562.6 589.5,561.1 590.9,562.0 592.5,559.5 595.5,540.4 598.6,559.5 599.9,561.4 601.3,561.3 601.8,562.4 602.7,562.7 603.2,561.7 605.1,562.8 607.4,562.2 608.9,563.3 609.3,562.6 611.2,562.8 611.7,562.3 615.0,563.1 616.0,562.1 616.4,562.5 616.9,562.1 618.3,563.1 619.3,562.1 625.4,563.0 625.9,562.3 626.4,563.4 627.3,561.7 628.3,563.1 629.2,562.1 629.7,562.7 631.1,562.8 631.6,561.4 632.5,562.8 634.4,562.3 635.4,563.1 635.8,562.4 637.3,563.1 638.7,562.6 639.2,563.1 639.6,562.5 641.5,562.8 642.0,562.1 642.5,563.4 642.9,562.6 643.4,563.0 644.4,562.0 645.8,562.5 646.3,561.4 648.0,562.3 648.6,561.2 649.1,561.5 650.5,560.5 651.8,555.8 654.0,542.6 656.2,556.8 658.6,561.7 660.0,561.3 660.9,562.4 661.4,561.6 661.9,562.5 662.3,561.5 663.3,562.7 664.2,561.8 664.7,563.0 665.2,561.9 665.7,562.6 666.1,561.9 667.1,563.1 668.5,561.8 669.9,562.7 671.8,562.7 672.3,563.6 673.7,561.7 674.6,562.8 675.1,562.4 676.5,563.3 677.0,562.1 678.0,563.1 678.9,562.3 680.3,563.0 681.7,562.3 682.7,563.1 683.2,562.2 683.6,563.0 684.1,562.3 684.6,562.6 685.5,562.0 686.9,563.0 689.3,561.8 689.8,562.5 690.7,562.3 692.2,563.0 692.6,562.3 693.1,563.1 693.6,562.5 694.0,563.2 694.5,562.2 695.0,563.0 695.5,562.3 695.9,563.2 696.9,562.2 698.8,563.5 699.3,562.5 700.2,563.0 700.7,562.4 701.1,562.9 702.6,562.8 703.0,561.7 703.5,563.1 704.0,562.3 704.5,562.2 704.9,563.3 705.9,562.3 706.4,562.7 707.3,562.0 708.7,563.4 709.2,562.2 709.7,562.6 710.6,562.1 711.1,562.6 711.6,561.3 713.0,561.7 716.0,554.8 717.2,556.9 718.2,560.5 720.1,560.3 721.0,559.1 722.0,555.9 723.7,545.4 724.5,544.2 727.6,559.4 728.6,561.0 729.1,560.3 731.0,562.2 731.4,560.9 731.9,561.4 733.8,561.0 734.3,561.7 734.7,560.4 735.2,560.7 735.7,560.1 737.3,555.6 738.8,544.6 739.6,542.3 742.3,557.4 743.7,560.7 744.2,561.0 744.7,560.5 745.2,561.4 746.6,561.9 747.1,562.6 748.5,561.4 750.4,562.6 751.3,562.2 751.8,562.7 752.3,562.1 753.2,563.2 754.6,563.1 755.1,562.1 755.6,562.6 757.0,562.1 757.5,562.8 757.9,562.1 759.4,562.5 759.8,563.2 763.1,562.1 764.1,562.2 764.6,562.8 766.5,562.9 766.9,562.1 767.9,563.1 768.8,562.0 769.3,562.7 769.8,562.3 771.2,563.0 772.1,562.0 772.6,563.2 773.1,562.1 773.6,563.1 774.5,562.4 775.9,563.4 776.4,562.6 776.9,563.1 777.3,561.8 777.8,562.8 778.8,563.2 779.7,563.2 780.2,562.4 782.1,562.9 782.5,562.3 783.5,563.4 784.0,562.6 784.4,563.2 785.4,562.4 785.9,563.1 786.3,562.4 786.8,563.0 787.3,562.2 789.2,563.1 790.1,562.3 790.6,563.3 791.1,562.4 791.5,563.3 792.5,563.4 793.0,562.0 794.4,563.0 794.9,562.4 795.3,563.6 796.3,561.9 796.7,562.9 797.7,562.5 798.2,563.1 799.1,562.4 800.5,562.9 801.9,562.2 803.4,563.7 803.8,562.5 805.3,563.5 806.2,562.4 806.7,563.2 808.1,562.3 809.5,563.0 810.0,562.2 811.4,563.3 812.4,562.6 812.8,563.0 813.3,562.4 815.2,562.6 815.7,563.1 816.6,561.9 817.1,563.2 818.0,562.4 819.5,563.3 820.9,562.3 821.4,562.8 821.8,562.4 822.3,563.2 824.7,562.4 825.1,563.2 825.6,562.3 827.5,563.3 829.4,562.6 830.8,563.3 831.3,562.8 833.2,562.7 833.7,563.4 836.5,562.3 837.9,563.2 841.2,562.5 843.6,563.2 844.1,562.6 845.5,562.9 846.0,561.9 846.4,563.1 847.4,562.7 847.9,563.2 848.8,562.1 852.1,562.9 854.0,562.5 854.5,563.5 855.4,561.9 856.8,563.1 857.3,562.6 857.8,563.1 858.3,562.5 858.7,562.9 859.7,562.2 860.2,563.5 860.6,562.6 861.6,563.3 863.0,562.3 863.5,563.3 864.4,561.9 866.3,563.1 868.2,561.6 868.7,562.3 869.6,561.9 870.1,563.0 872.0,562.0 872.5,562.3 872.9,561.4 874.4,561.4 875.8,559.4 878.0,553.7 880.5,560.0 882.9,562.5 883.3,561.5 883.8,562.3 884.3,561.8 884.8,562.2 885.7,561.8 886.2,562.4 886.7,562.0 887.1,563.1 887.6,562.3 889.0,562.6 890.0,562.0 890.4,563.4 891.9,562.3 892.3,562.9 894.2,562.3 895.7,563.3 896.1,562.6 897.1,562.9 897.5,562.3 898.0,563.5 901.3,562.5 902.8,563.2 903.2,562.0 903.7,563.6 904.6,562.2 905.6,563.1 907.0,562.3 907.5,563.1 908.0,562.5 909.4,562.2 910.3,563.3 911.3,562.1 912.2,562.6 912.7,561.8 913.2,563.1 913.6,562.4 914.1,562.9 915.5,562.1 916.0,563.0 916.9,563.3 917.4,562.5 918.8,563.0 919.8,562.2 920.3,562.6 921.2,562.3 922.2,563.1 922.6,562.1 923.6,562.0 924.0,563.1 925.0,563.0 925.9,561.5 926.9,561.5 929.3,558.9 929.7,559.1 930.7,556.6 932.6,557.8 933.0,557.5 934.5,559.5 934.9,558.6 935.9,559.2 936.4,558.4 937.3,560.0 937.8,559.4 938.7,560.8 939.2,560.6 939.7,561.8 940.6,562.3 941.6,561.7 942.0,562.7 944.4,562.1 945.3,563.0 946.3,562.6 946.8,562.9 947.7,561.9 948.2,562.9 949.1,562.2 949.6,562.9 950.6,563.1 951.0,562.5 952.4,562.7 952.9,562.2 953.9,563.3 955.3,562.5 957.2,563.4 958.6,562.6 959.1,563.2 960.5,563.2 961.0,562.5 962.4,563.2 962.9,562.7 963.3,563.4 964.7,562.6 969.5,562.9 970.4,562.4 971.8,563.3 973.3,562.4 973.7,562.9 974.7,562.5 975.6,562.8 976.1,562.1 978.0,563.1 978.5,562.5 979.9,562.9 981.8,562.2 982.7,563.3 983.7,563.2 984.6,562.4 987.5,562.6 988.4,561.0 988.9,561.7 989.8,559.8 992.2,558.3 996.0,562.2 996.5,561.9 997.4,562.6 997.9,561.6 998.3,562.8 999.3,562.5 999.8,563.3 1002.6,562.3 1004.5,562.9 1005.0,562.3 1005.9,563.0 1006.4,562.2 1007.3,562.7 1008.3,562.4 1008.8,563.3 1009.2,562.8 1010.7,563.0 1011.1,562.3 1013.0,563.2 1014.4,562.7 1014.9,563.5 1016.8,562.3 1017.3,563.2 1017.8,562.6 1018.2,563.0 1019.6,562.5 1021.5,563.2 1022.0,562.4 1023.0,563.2 1024.4,561.8 1025.3,561.9 1025.8,562.7 1026.7,561.5 1028.2,561.0 1028.6,560.0 1030.1,560.7 1030.5,559.6 1031.0,560.7 1031.9,560.3 1032.4,561.6 1034.3,562.0 1034.8,561.5 1035.7,562.5 1036.2,562.1 1037.2,562.8 1037.6,561.8 1038.1,563.0 1039.0,562.7 1040.0,563.5 1040.5,562.4 1040.9,563.1 1042.8,563.2 1043.8,561.9 1045.2,563.4 1045.7,562.8 1046.1,563.3 1046.6,562.5 1049.0,563.4 1049.5,562.6 1049.9,563.4 1052.3,562.5 1054.2,562.5 1054.7,563.5 1055.1,562.7 1056.1,563.3 1058.0,562.4 1058.5,563.7 1059.4,562.1 1060.3,562.3 1061.3,563.4 1062.7,562.5 1063.2,563.1 1064.1,562.8 1064.6,563.5 1065.5,562.3 1066.0,562.0 1066.5,562.9 1067.0,562.2 1068.4,563.7 1068.9,562.5 1069.3,563.0 1069.8,562.0 1071.2,563.5 1071.7,562.3 1073.1,563.7 1073.6,562.5 1074.5,563.1 1076.0,562.5 1076.8,562.8"/>
<polyline stroke="#7a10f0" stroke-width="2" points="4.1,545.7 5.9,549.7 6.9,548.8 7.8,550.4 8.3,550.1 8.8,551.6 9.7,550.9 10.7,552.1 11.6,551.3 12.1,552.6 12.6,552.3 13.5,553.9 14.0,552.9 15.4,554.0 16.8,553.3 17.8,555.2 18.2,553.9 19.7,554.8 20.1,553.9 21.6,556.2 23.5,555.6 23.9,556.2 24.4,555.1 24.9,556.5 25.8,556.0 26.3,556.8 26.8,556.0 27.7,556.6 28.2,555.6 30.1,557.6 32.0,556.6 32.4,558.2 32.9,557.6 33.4,558.0 33.9,556.6 34.3,557.5 35.3,557.9 35.8,557.0 36.2,557.7 36.7,557.4 37.2,558.5 37.7,557.1 42.4,558.2 43.3,557.6 43.8,558.1 44.3,557.3 44.7,558.9 45.7,557.4 46.6,559.0 47.1,557.7 48.1,558.9 48.5,558.1 49.5,559.1 50.0,558.6 51.8,559.1 53.3,558.3 54.7,559.4 55.6,558.1 56.6,559.1 57.1,558.4 57.5,559.4 58.0,558.4 58.5,559.1 58.9,558.6 60.4,558.9 60.8,559.5 62.3,557.2 62.7,558.8 63.7,559.6 64.2,558.7 64.6,560.0 65.6,559.0 66.0,559.8 66.5,558.5 68.4,559.9 69.8,559.1 71.3,559.7 71.7,559.3 72.2,560.1 73.1,558.8 74.1,559.7 75.5,558.7 76.0,560.2 77.4,559.0 77.9,560.0 78.4,559.3 78.8,559.8 79.3,558.5 80.2,559.7 81.2,559.2 82.1,560.2 82.6,559.6 83.1,560.4 85.4,560.2 86.4,559.4 87.3,560.3 87.8,559.5 88.3,560.8 88.8,560.8 89.2,559.5 90.2,559.4 91.1,560.5 92.1,559.7 93.5,560.6 94.4,559.6 95.4,560.5 96.8,559.7 97.3,560.6 97.8,560.1 98.2,561.0 99.6,559.6 100.1,560.6 101.1,559.7 102.0,560.4 103.4,559.6 105.8,560.8 106.7,559.7 107.2,560.9 107.7,559.7 108.6,560.3 110.1,559.6 110.5,560.4 111.5,560.4 112.0,559.4 112.9,560.7 114.8,560.2 115.3,559.2 115.7,561.2 116.2,559.8 117.2,560.6 119.0,559.9 119.5,561.1 120.0,559.7 120.5,560.5 120.9,559.7 121.4,560.2 122.8,559.9 123.8,560.8 125.2,559.4 125.7,561.3 126.6,559.9 127.1,561.0 128.0,559.4 129.0,560.9 129.5,559.8 131.8,560.9 132.8,560.1 133.2,560.4 133.7,559.6 134.7,561.6 135.6,560.4 137.0,560.9 137.5,559.8 138.0,560.8 138.5,560.2 139.4,561.1 139.9,559.9 140.3,561.7 141.3,560.4 143.2,560.8 143.7,559.6 144.1,560.7 145.1,561.1 146.0,560.3 147.4,560.9 147.9,560.3 148.4,561.4 148.9,560.8 149.8,561.0 150.3,560.6 151.2,561.0 151.7,559.8 153.1,560.6 155.0,559.6 155.5,560.8 156.4,560.7 156.9,562.3 158.3,560.4 158.8,561.0 159.7,560.1 160.2,560.9 161.2,559.9 162.1,561.2 162.6,560.0 163.1,560.8 164.5,561.0 165.0,560.2 165.9,560.2 166.8,561.1 167.8,560.3 168.3,560.9 168.7,559.4 169.7,561.0 170.2,560.2 171.6,560.9 172.5,560.4 173.5,560.9 174.9,560.4 175.4,562.2 175.8,561.2 177.7,560.4 179.2,560.8 179.6,560.0 180.1,561.1 181.0,560.1 182.0,561.8 182.5,560.6 182.9,561.0 183.9,560.3 184.8,561.0 185.3,560.4 188.6,560.8 189.6,561.4 190.0,560.3 190.5,561.0 192.9,560.8 193.3,561.3 193.8,560.4 194.3,561.2 194.8,560.4 195.2,561.8 196.2,560.4 197.1,561.2 197.6,560.7 198.1,561.4 198.6,560.9 199.0,561.9 199.5,561.1 200.9,560.5 201.4,561.3 201.9,560.2 203.3,562.0 203.8,560.2 204.2,561.0 205.7,561.4 206.1,560.3 206.6,561.0 207.1,560.1 208.0,562.0 208.5,560.5 209.4,561.0 209.9,560.2 210.4,561.1 210.9,560.4 211.8,561.3 212.3,560.7 212.8,561.2 213.2,560.4 215.6,561.1 216.1,560.5 216.5,561.1 217.0,560.7 217.5,561.4 218.4,560.8 218.9,561.3 219.9,561.2 220.3,560.6 220.8,561.3 221.7,560.2 222.7,561.7 223.6,560.5 224.1,561.1 224.6,560.4 226.5,561.2 229.8,560.7 230.3,561.7 231.7,561.0 233.1,561.3 233.6,560.6 234.5,561.6 235.0,560.8 235.5,561.4 235.9,560.0 236.4,561.0 238.3,560.7 238.8,559.9 239.3,560.5 240.2,560.0 240.7,560.9 241.1,559.6 242.1,559.6 242.6,560.3 244.0,558.6 246.7,543.5 248.7,556.6 249.7,559.2 250.6,559.0 251.6,560.5 252.5,559.7 253.0,560.5 253.9,560.2 254.4,561.2 254.9,560.0 255.8,560.1 256.3,560.8 258.7,560.0 259.1,559.1 260.1,560.0 261.0,558.4 261.5,559.1 262.4,557.4 262.9,557.8 264.2,555.0 265.4,546.4 266.2,529.1 267.7,458.7 268.9,527.4 270.0,549.8 271.4,556.5 272.4,558.3 272.9,558.1 273.8,559.0 274.3,558.8 274.7,559.4 275.2,559.2 276.2,560.6 277.1,560.1 277.6,561.0 278.1,559.8 279.5,561.0 281.4,560.7 281.8,561.8 282.3,560.2 283.3,561.9 284.7,560.7 285.2,561.4 285.6,560.8 286.1,561.4 286.6,559.9 287.1,560.7 287.5,560.1 288.0,561.5 288.5,560.7 288.9,561.5 289.9,560.7 290.4,561.8 292.3,561.4 293.2,561.8 294.2,560.8 294.6,561.7 295.6,561.1 296.5,561.4 297.0,560.7 298.4,561.2 298.9,560.2 299.8,561.3 300.8,560.6 301.3,561.5 301.7,561.0 303.1,561.3 303.6,561.9 304.1,561.4 304.6,562.1 305.0,560.1 306.5,561.0 308.3,560.8 308.8,561.6 309.3,561.0 310.2,561.8 311.7,560.7 312.1,561.8 312.6,560.4 313.6,561.4 315.0,560.8 315.9,561.7 316.4,561.1 316.9,562.2 317.8,560.7 319.7,560.9 320.7,561.6 322.5,560.5 323.5,561.6 324.9,560.6 326.3,561.6 326.8,560.8 328.2,561.2 328.7,560.4 329.2,561.3 329.6,560.4 332.0,561.6 334.9,560.7 335.3,562.5 335.8,560.9 336.3,561.8 338.2,559.3 338.6,560.0 339.6,557.6 340.1,558.2 340.5,557.4 342.0,560.3 342.4,558.8 343.4,561.4 345.7,559.8 346.2,558.7 349.5,561.0 350.5,560.9 350.9,560.1 351.4,561.4 352.4,560.8 352.8,561.6 355.2,560.8 356.1,561.4 357.1,560.2 357.6,561.8 358.5,560.9 359.9,561.2 360.9,560.7 361.4,561.4 363.2,561.3 363.7,561.8 364.7,560.5 365.6,560.7 366.1,561.8 366.6,560.6 367.0,561.7 368.0,560.5 368.5,561.8 368.9,560.9 370.3,561.7 372.2,560.8 372.7,562.0 373.7,561.5 374.6,561.9 375.1,561.3 376.0,562.1 377.0,561.1 377.4,561.9 377.9,561.8 378.4,560.6 379.3,562.1 380.3,561.2 380.8,561.9 382.2,561.1 382.7,562.5 384.1,560.9 385.0,562.2 385.5,561.1 386.9,561.5 387.9,560.8 390.2,561.8 390.7,561.2 393.1,561.0 393.5,562.1 394.0,561.1 395.4,561.8 395.9,560.8 397.3,561.9 397.8,561.4 398.3,561.6 398.7,560.6 399.7,562.2 402.1,560.4 403.5,562.2 404.4,561.0 404.9,561.5 405.4,560.8 405.8,561.4 406.3,560.7 407.3,561.9 408.7,562.2 410.1,560.4 411.5,561.9 412.0,560.9 412.9,561.6 413.9,561.1 414.4,562.2 414.8,561.0 416.3,561.5 416.7,560.5 417.7,560.4 418.1,561.8 419.1,560.8 419.6,561.8 420.0,561.6 420.5,562.1 421.0,560.3 422.9,561.3 423.8,560.7 424.3,561.3 424.8,560.3 425.7,561.1 426.2,559.9 426.7,560.4 428.1,559.3 430.4,545.3 432.3,557.4 433.3,560.2 434.4,560.7 435.2,560.3 435.7,561.1 436.6,560.7 437.1,561.8 439.0,561.0 439.4,562.1 439.9,560.9 441.3,561.9 442.8,561.0 443.7,561.0 444.2,561.5 444.6,560.6 445.1,562.4 446.1,561.1 446.5,562.0 447.0,561.0 447.5,561.9 448.0,561.3 448.4,561.7 449.4,561.2 450.3,561.5 450.8,560.3 451.7,561.7 452.2,560.8 453.6,560.3 454.1,561.5 454.6,560.4 456.0,559.7 456.5,560.6 457.4,557.0 457.9,558.3 458.4,558.0 459.8,559.1 460.3,561.1 461.2,560.5 461.7,561.6 462.6,560.2 463.6,560.9 464.0,562.4 464.5,561.3 465.9,561.2 466.4,559.8 467.4,561.6 469.7,560.3 470.7,560.6 472.9,557.1 473.5,558.3 474.5,558.1 475.4,560.2 475.9,560.1 476.8,561.6 477.3,560.8 479.7,561.5 481.6,561.0 482.0,562.2 483.5,560.6 484.9,562.0 485.8,561.0 486.3,562.1 486.8,561.2 487.7,561.2 488.2,562.0 488.7,561.2 489.1,562.1 489.6,560.7 490.6,562.0 491.0,560.8 492.0,561.7 492.4,560.4 492.9,561.9 493.9,560.9 494.3,562.5 494.8,561.0 496.2,561.9 496.7,561.3 497.2,562.0 498.6,562.0 499.1,560.7 499.5,562.1 501.4,561.0 502.9,561.6 503.8,561.0 505.2,562.3 505.7,560.3 508.1,561.7 509.0,561.1 510.0,561.4 510.9,559.6 511.8,558.7 512.3,559.0 513.1,557.7 514.2,559.6 514.7,559.2 515.2,560.3 515.6,560.2 516.1,560.9 516.6,560.6 517.5,561.9 518.0,561.3 518.9,561.0 519.9,561.5 520.8,560.8 524.6,561.4 525.1,560.3 525.6,561.4 527.5,561.3 528.4,562.4 528.9,561.3 529.4,562.2 529.8,561.4 531.3,560.7 532.7,562.0 533.6,561.5 534.1,562.5 534.6,561.5 535.5,561.2 537.9,562.3 538.8,560.8 540.2,562.0 540.7,560.8 541.2,561.9 541.7,561.1 542.6,561.9 543.1,561.0 543.6,561.5 546.9,561.5 547.8,562.2 549.7,560.9 550.2,562.3 550.7,561.4 551.1,562.5 552.1,561.7 552.5,562.5 553.5,561.4 554.9,561.8 555.4,560.4 556.3,561.8 556.8,560.6 557.8,561.6 558.2,560.8 560.1,561.8 560.6,560.9 561.5,561.7 562.5,560.7 563.0,561.2 563.9,560.3 564.9,560.4 566.7,555.4 568.2,557.1 568.6,558.9 569.1,558.8 570.1,560.2 570.5,559.9 571.5,561.4 572.0,560.5 573.4,561.0 573.8,560.4 574.8,561.3 575.7,560.1 576.2,560.2 578.3,555.3 581.4,561.1 581.9,560.7 584.7,561.9 585.2,561.1 587.1,561.0 589.0,562.1 589.9,559.9 590.4,561.0 591.4,558.3 591.8,558.9 592.3,558.0 593.2,559.3 593.7,559.2 594.7,561.3 595.1,560.9 596.1,561.9 596.6,562.0 597.0,560.3 597.5,561.7 598.9,561.4 600.8,562.1 602.2,560.5 602.7,561.0 603.2,560.7 604.6,562.1 605.1,561.5 605.6,562.5 606.5,560.8 607.0,561.4 607.4,561.0 608.4,562.2 610.3,560.6 610.8,561.9 611.7,561.6 612.6,562.1 614.1,561.4 614.5,562.1 615.0,561.6 615.5,562.4 616.0,561.1 616.4,562.0 616.9,561.7 618.8,562.4 619.3,560.7 620.2,561.4 620.7,560.6 621.2,561.6 622.6,561.0 624.0,561.7 625.0,561.0 625.4,562.5 625.9,561.6 626.8,561.7 627.3,562.5 627.8,561.2 628.3,561.9 628.7,561.7 629.7,562.3 630.2,561.8 630.6,562.4 631.6,561.7 633.0,561.6 633.5,560.6 634.4,562.1 635.8,561.6 636.8,562.0 637.3,560.8 638.2,561.7 639.2,561.7 639.6,560.9 640.1,561.3 640.6,561.0 641.0,563.0 641.5,561.4 642.5,560.6 643.4,562.4 643.9,561.3 644.8,562.4 645.8,561.1 646.7,561.2 647.2,562.1 647.7,560.4 648.1,562.1 648.6,561.6 649.1,562.2 649.6,560.9 651.9,561.5 652.4,562.4 652.9,561.1 653.8,561.7 655.2,560.8 657.1,562.3 659.5,561.2 662.3,561.3 662.8,562.4 663.3,561.0 663.8,562.2 664.2,561.2 664.7,561.6 665.2,561.0 666.1,562.0 666.6,561.1 668.0,561.5 668.5,561.1 669.9,562.3 671.3,560.7 672.3,561.6 672.8,561.0 673.2,561.6 674.2,561.5 674.6,562.3 675.1,561.1 676.5,562.1 677.5,560.9 678.0,561.9 678.4,562.1 678.9,561.4 679.9,562.6 680.3,561.8 682.2,561.4 683.2,561.8 685.1,561.1 685.5,561.2 686.0,563.1 687.4,561.5 687.9,562.3 688.4,560.9 689.3,561.9 689.8,561.5 690.7,561.9 691.2,561.3 692.2,562.2 693.1,561.6 693.6,562.1 694.0,561.0 694.5,562.1 695.0,560.7 695.9,562.0 696.9,561.0 697.8,562.1 698.8,560.6 699.3,562.3 699.7,561.3 701.6,561.7 702.1,561.1 703.0,562.0 703.5,560.8 704.0,562.2 704.5,561.3 707.8,561.4 708.2,560.6 708.7,561.9 709.2,561.0 710.6,561.8 711.1,561.4 711.6,562.3 712.0,562.2 712.5,561.2 713.0,562.3 713.5,560.9 713.9,561.7 715.3,561.4 716.3,561.7 718.2,561.0 719.6,562.4 720.1,561.3 721.0,561.8 722.0,561.0 722.4,561.5 722.9,561.1 723.9,562.4 725.3,561.3 725.8,562.0 726.7,562.0 728.1,561.1 730.5,561.5 731.0,560.9 731.4,562.7 732.9,561.1 733.3,562.1 734.3,561.2 735.2,562.5 735.7,561.7 736.2,562.1 736.6,561.3 737.1,562.0 737.6,560.7 738.5,562.0 739.5,562.1 740.4,560.9 740.9,561.7 741.4,561.1 741.8,562.0 742.8,560.5 743.3,562.2 743.7,561.0 744.2,561.0 744.7,562.5 746.1,561.1 746.6,561.8 747.5,561.3 748.9,561.7 749.4,561.1 749.9,561.9 750.4,560.8 751.3,562.0 752.3,561.4 752.7,562.5 753.2,561.5 753.7,562.2 754.6,561.2 755.1,562.0 755.6,561.4 756.0,561.8 756.5,560.7 757.5,562.1 759.8,561.1 761.7,561.7 763.1,561.2 764.1,562.4 765.0,561.5 765.5,562.8 766.5,561.4 767.4,562.1 767.9,560.8 768.8,561.7 769.8,561.0 770.2,562.1 770.7,560.3 771.2,562.0 771.7,561.7 772.1,562.1 772.6,561.6 773.1,562.2 774.0,561.1 775.0,561.7 775.4,560.9 775.9,562.0 776.4,561.2 776.9,561.7 779.2,562.0 780.2,561.4 781.1,562.2 784.4,561.6 785.4,563.0 785.9,561.6 786.3,562.4 787.3,562.2 787.8,561.3 788.2,562.2 788.7,561.5 790.1,562.4 790.6,561.4 792.0,560.8 792.5,561.5 794.9,562.0 795.3,560.7 795.8,562.5 796.7,561.4 797.7,562.1 800.5,561.9 801.0,561.3 801.5,562.1 801.9,561.4 802.4,561.9 803.8,561.5 804.3,562.1 806.7,561.1 808.6,562.7 809.5,561.9 810.5,562.5 810.9,561.4 811.9,562.4 812.4,560.6 812.8,561.6 813.8,561.3 814.3,562.0 814.7,560.9 815.2,562.4 816.1,561.7 816.6,562.0 817.1,561.0 817.6,562.4 818.5,561.5 819.9,561.5 820.4,560.6 820.9,561.9 821.8,561.2 822.3,561.8 824.7,561.9 825.1,562.4 825.6,561.5 826.1,562.4 826.6,560.7 828.5,561.9 828.9,561.0 830.3,561.9 830.8,561.1 832.2,562.4 833.2,561.3 834.1,561.7 835.6,560.7 836.0,562.3 836.5,560.7 837.0,560.6 837.4,561.3 838.4,559.8 838.9,560.7 839.8,560.2 841.2,561.5 842.2,560.8 843.1,562.5 843.6,561.2 844.5,562.0 845.0,560.9 845.5,562.4 846.0,560.7 846.4,561.9 846.9,560.9 847.9,562.2 849.7,561.1 850.2,562.0 851.2,561.3 852.6,562.0 853.5,561.2 854.5,562.2 855.0,561.0 855.4,562.3 855.9,561.5 856.8,562.3 858.7,560.4 859.2,561.5 860.2,560.9 861.1,561.7 861.6,560.4 862.1,561.2 863.0,560.7 863.9,559.9 864.9,557.6 865.8,557.4 866.3,556.4 866.8,557.2 868.2,557.6 870.1,561.8 871.0,560.4 872.5,562.1 872.9,561.0 873.9,561.7 874.4,561.3 875.3,562.4 875.8,561.1 877.2,562.1 877.7,561.4 878.1,561.9 879.6,561.0 881.0,562.5 882.4,560.1 882.9,562.1 884.3,561.2 884.8,561.8 885.2,561.4 885.7,562.1 887.1,560.5 887.6,561.2 888.1,561.1 890.0,559.5 890.9,556.8 892.3,555.7 895.2,561.0 896.6,561.4 897.1,560.8 897.5,561.9 898.0,561.4 898.5,561.7 899.0,560.8 899.9,561.7 900.4,561.1 901.3,561.8 901.8,560.8 902.3,561.2 902.8,560.8 904.6,562.1 905.1,561.3 907.5,562.1 908.4,561.0 908.9,561.8 909.9,561.0 910.3,562.0 911.3,562.2 911.7,561.1 913.2,562.4 914.1,561.2 915.1,561.9 915.5,561.4 916.0,562.2 916.9,561.4 917.4,562.0 920.3,561.6 920.7,562.1 922.6,561.0 923.1,562.1 923.6,561.2 924.5,561.7 925.9,560.8 926.4,562.2 926.9,561.4 927.8,561.8 928.3,561.1 929.3,562.1 930.2,561.6 930.7,562.3 931.1,561.3 932.6,561.5 933.0,560.8 934.0,561.8 934.5,560.9 934.9,561.9 935.9,562.3 936.4,561.2 939.2,562.0 940.6,560.9 941.1,562.0 942.0,562.1 942.5,561.0 943.0,562.2 943.9,561.0 944.4,561.7 944.9,561.3 945.3,562.6 945.8,561.8 946.3,562.4 946.8,561.6 947.7,562.0 948.2,561.2 950.1,562.3 951.0,560.6 951.5,561.9 952.0,561.4 952.4,561.8 952.9,561.2 954.3,562.4 955.3,561.0 955.8,561.6 956.2,561.2 957.2,562.3 957.6,561.2 958.6,561.6 961.0,560.5 961.4,561.0 963.3,556.2 964.3,555.6 965.7,559.1 966.6,559.4 967.6,560.9 969.5,560.0 970.0,560.4 971.4,559.2 971.8,560.1 972.3,559.4 972.8,560.3 973.3,559.4 975.2,561.3 975.6,560.8 977.1,561.9 978.5,560.7 978.9,561.6 979.9,560.3 980.4,562.2 980.8,561.6 981.3,562.0 983.2,561.2 984.6,561.6 987.0,561.4 987.5,562.3 988.4,560.8 989.4,562.3 989.8,561.0 990.8,563.0 991.2,561.8 992.7,561.1 994.1,562.6 995.5,561.4 996.0,562.1 996.9,561.5 997.4,562.6 998.8,561.6 999.8,562.7 1000.2,561.7 1000.7,562.3 1001.2,561.4 1002.6,561.4 1003.1,561.9 1004.0,561.1 1004.5,561.5 1005.0,561.1 1005.4,562.0 1005.9,561.3 1006.9,562.1 1009.2,561.2 1010.7,562.4 1011.6,561.2 1013.5,562.1 1014.0,561.7 1014.4,562.3 1015.4,561.3 1015.9,562.1 1016.3,560.9 1016.8,562.4 1017.3,561.5 1017.8,562.2 1018.2,561.6 1018.7,562.2 1019.2,561.7 1020.1,561.9 1021.1,561.0 1021.5,562.0 1022.0,561.3 1023.0,561.7 1023.4,560.7 1023.9,562.7 1024.4,562.0 1024.9,562.5 1025.8,561.8 1026.3,559.9 1026.7,561.5 1027.2,560.9 1028.2,561.9 1029.1,560.9 1029.6,561.6 1030.5,561.5 1031.0,562.4 1032.4,561.4 1032.9,562.1 1034.8,561.4 1036.2,562.4 1037.2,561.5 1037.6,562.4 1038.1,561.6 1039.0,562.1 1039.5,561.4 1040.0,562.0 1040.9,562.0 1041.9,560.4 1042.4,562.7 1042.8,561.7 1043.8,561.3 1044.7,562.9 1045.2,561.1 1045.7,562.2 1046.1,561.7 1046.6,562.3 1048.0,561.3 1049.0,562.0 1049.5,561.5 1049.9,561.9 1051.4,561.4 1051.8,562.0 1052.8,561.6 1053.7,562.1 1054.2,560.9 1054.7,561.9 1056.1,561.1 1056.6,562.7 1057.0,560.8 1058.0,562.3 1058.9,560.7 1059.9,562.3 1060.8,561.1 1061.3,562.4 1062.2,561.9 1062.7,560.7 1063.2,561.8 1063.7,561.1 1064.6,562.1 1065.1,561.2 1066.0,562.5 1066.5,561.4 1067.4,562.0 1068.4,561.6 1070.8,562.3 1071.2,561.7 1071.7,562.4 1072.2,561.7 1073.1,562.2 1074.1,560.8 1075.0,562.4 1075.5,561.1 1076.8,561.7"/>
</g>
<rect x="0" y="564" width="1128" height="1" fill="#f4f4f4"/>
<g fill="#f4f4f4">
<rect x="131" y="560" width="1" height="4"/><rect x="288" y="560" width="2" height="4"/><rect x="446" y="560" width="1" height="4"/>
<rect x="603" y="560" width="2" height="4"/><rect x="761" y="560" width="1" height="4"/><rect x="919" y="560" width="2" height="4"/>
<rect x="1077" y="560" width="1" height="4"/>
<rect x="0" y="190" width="5" height="1"/><rect x="0" y="284" width="5" height="1"/><rect x="0" y="377" width="5" height="1"/><rect x="0" y="471" width="5" height="1"/>
</g>
<g fill="#f0f0f0" font-family="Liberation Sans" font-size="11px">
<text x="5" y="194">8000</text><text x="5" y="288">6000</text><text x="5" y="381">4000</text><text x="5" y="475">2000</text>
<text x="288.5" y="575" text-anchor="middle">20</text><text x="604" y="575" text-anchor="middle">40</text><text x="919.5" y="575" text-anchor="middle">60</text>
</g>
<!-- residual -->
<rect x="0" y="649" width="1128" height="2" fill="#bdbdbd"/>
<polyline fill="none" stroke="#0b780b" stroke-width="1.4" points="4.1,640.5 5.9,642.5 6.9,642.0 8.8,643.4 9.7,643.1 10.7,643.7 11.6,643.3 13.5,644.6 14.0,644.1 15.4,644.6 16.8,644.3 17.8,645.2 18.2,644.6 19.7,645.0 20.1,644.6 21.6,645.7 23.5,645.4 23.9,645.7 24.4,645.2 24.9,645.9 25.8,645.6 26.3,646.0 26.8,645.6 27.7,645.9 28.2,645.4 30.1,646.4 32.0,646.0 32.4,646.7 33.4,646.7 33.9,645.9 35.3,646.6 35.8,646.1 36.7,646.3 37.2,646.9 37.7,646.2 42.4,646.8 44.3,646.3 44.7,647.1 45.7,646.4 46.6,647.2 47.1,646.5 48.1,647.1 48.5,646.7 49.5,647.2 53.3,646.8 54.7,647.3 55.6,646.7 56.6,647.2 57.1,646.9 57.5,647.4 58.0,646.9 60.8,647.4 62.3,646.2 62.7,647.0 63.7,647.5 64.2,647.0 64.6,647.6 65.6,647.2 66.0,647.5 66.5,646.9 68.4,647.6 69.8,647.2 71.7,647.3 72.2,647.7 73.1,647.0 74.1,647.5 75.5,647.0 76.0,647.8 77.4,647.1 77.9,647.6 78.8,647.5 79.3,646.9 80.2,647.5 81.2,647.2 83.1,647.8 86.4,647.4 87.3,647.8 87.8,647.4 88.8,648.0 89.2,647.4 90.2,647.4 91.1,647.9 92.1,647.5 93.5,647.9 94.4,647.4 95.4,647.9 97.8,647.7 98.2,648.2 99.6,647.5 100.1,647.9 101.1,647.5 102.0,647.8 103.4,647.4 105.8,648.0 106.7,647.5 107.2,648.1 107.7,647.5 111.5,647.8 112.0,647.3 112.9,648.0 114.8,647.7 115.3,647.2 115.7,648.2 116.2,647.5 117.2,648.0 119.0,647.6 119.5,648.2 120.0,647.5 120.5,647.9 120.9,647.5 123.8,648.0 125.2,647.3 125.7,648.3 126.6,647.6 127.1,648.1 128.0,647.4 129.0,648.1 129.5,647.5 131.8,648.1 133.7,647.5 134.7,648.5 135.6,647.8 137.0,648.1 137.5,647.6 138.0,648.1 138.5,647.7 139.4,648.2 139.9,647.6 140.3,648.5 141.3,647.8 143.2,648.0 143.7,647.4 145.1,648.2 147.9,647.8 148.4,648.4 151.2,648.1 151.7,647.5 153.1,648.0 155.0,647.4 155.5,648.0 156.4,648.0 156.9,648.8 158.3,647.8 158.8,648.1 159.7,647.7 160.2,648.1 161.2,647.6 162.1,648.2 162.6,647.7 164.5,648.1 165.9,647.7 166.8,648.2 167.8,647.8 168.3,648.1 168.7,647.3 169.7,648.2 170.2,647.8 174.9,647.9 175.4,648.8 175.8,648.2 177.7,647.8 179.2,648.0 179.6,647.6 180.1,648.2 181.0,647.7 182.0,648.5 182.5,648.0 183.9,647.8 189.6,648.4 190.0,647.8 193.3,648.3 194.8,647.8 195.2,648.5 196.2,647.9 198.1,648.3 198.6,648.1 199.0,648.6 200.9,647.9 201.4,648.3 201.9,647.7 203.3,648.7 203.8,647.7 205.7,648.4 206.1,647.8 206.6,648.1 207.1,647.7 208.0,648.7 208.5,647.9 209.4,648.2 209.9,647.7 211.8,648.3 213.2,647.8 217.0,648.0 217.5,648.3 220.3,647.9 220.8,648.3 221.7,647.8 222.7,648.5 223.6,647.9 224.1,648.2 224.6,647.9 226.5,648.2 229.8,648.0 230.3,648.5 233.6,647.9 234.5,648.5 235.0,648.1 235.5,648.3 235.9,647.6 236.4,648.1 238.8,647.6 240.2,647.6 240.7,648.1 241.1,647.4 242.6,647.8 244.0,646.9 246.7,639.4 248.7,645.9 249.7,647.2 250.6,647.1 251.6,647.9 252.5,647.5 253.0,647.9 253.9,647.7 254.4,648.2 254.9,647.6 256.3,648.0 259.1,647.2 260.1,647.6 261.0,646.9 261.5,647.2 262.4,646.4 262.9,646.6 264.2,645.2 265.4,640.8 266.2,632.1 267.7,596.8 268.9,631.3 270.0,642.5 271.4,645.9 272.4,646.8 275.2,647.2 276.2,648.0 277.1,647.7 277.6,648.2 278.1,647.5 279.5,648.2 281.4,648.0 281.8,648.5 282.3,647.7 283.3,648.6 284.7,648.0 286.1,648.3 286.6,647.6 287.1,648.0 287.5,647.7 288.0,648.4 289.9,648.0 290.4,648.5 293.2,648.5 294.2,648.1 294.6,648.5 297.0,648.0 298.4,648.3 298.9,647.7 299.8,648.3 300.8,647.9 301.3,648.4 301.7,648.1 304.6,648.7 305.0,647.7 310.2,648.5 311.7,648.0 312.1,648.6 312.6,647.8 313.6,648.3 315.0,648.0 315.9,648.5 316.4,648.2 316.9,648.7 317.8,648.0 320.7,648.5 322.5,647.9 323.5,648.4 324.9,647.9 326.3,648.4 328.7,647.9 329.2,648.3 329.6,647.9 332.0,648.4 334.9,648.0 335.3,648.9 335.8,648.1 336.3,648.5 338.2,647.3 338.6,647.7 339.6,646.5 340.1,646.7 340.5,646.4 342.0,647.8 342.4,647.1 343.4,648.4 346.2,647.0 349.5,648.1 350.9,647.7 351.4,648.4 352.4,648.1 352.8,648.5 355.2,648.0 356.1,648.3 357.1,647.7 357.6,648.5 358.5,648.1 360.9,648.0 363.7,648.6 364.7,647.9 366.1,648.5 366.6,647.9 367.0,648.5 368.0,647.9 368.5,648.6 368.9,648.1 370.3,648.5 372.2,648.0 372.7,648.6 375.1,648.3 376.0,648.7 377.0,648.2 377.9,648.5 378.4,647.9 379.3,648.7 382.2,648.2 382.7,648.9 384.1,648.1 385.0,648.7 385.5,648.2 387.9,648.0 390.2,648.5 393.1,648.1 393.5,648.7 394.0,648.2 395.4,648.5 395.9,648.0 397.3,648.6 398.7,647.9 399.7,648.8 402.1,647.8 403.5,648.7 404.4,648.1 405.8,648.3 406.3,648.0 408.7,648.7 410.1,647.9 411.5,648.6 412.0,648.1 412.9,648.5 413.9,648.2 414.4,648.8 414.8,648.1 416.3,648.4 416.7,647.9 417.7,647.9 418.1,648.6 419.1,648.1 420.5,648.7 421.0,647.8 422.9,648.3 424.3,648.3 424.8,647.8 425.7,648.2 426.2,647.6 428.1,647.3 430.4,640.3 432.3,646.3 433.3,647.7 435.2,647.8 435.7,648.2 436.6,648.0 437.1,648.6 439.0,648.2 439.4,648.7 439.9,648.1 441.3,648.6 442.8,648.2 444.2,648.4 444.6,648.0 445.1,648.8 446.1,648.2 446.5,648.7 447.0,648.1 447.5,648.6 450.3,648.4 450.8,647.8 451.7,648.5 453.6,647.8 454.1,648.4 456.0,647.5 456.5,647.9 457.4,646.1 457.9,646.8 459.8,647.2 460.3,648.2 461.2,647.9 461.7,648.4 462.6,647.8 463.6,648.1 464.0,648.9 464.5,648.3 465.9,648.3 466.4,647.5 467.4,648.5 470.7,648.0 472.9,646.2 473.5,646.8 474.5,646.7 476.8,648.5 477.3,648.0 479.7,648.4 481.6,648.1 482.0,648.7 483.5,647.9 484.9,648.6 485.8,648.2 486.3,648.7 486.8,648.2 488.2,648.6 488.7,648.2 489.1,648.7 489.6,648.0 490.6,648.6 491.0,648.0 492.0,648.5 492.4,647.8 492.9,648.6 493.9,648.1 494.3,648.9 494.8,648.1 498.6,648.6 499.1,648.0 499.5,648.7 503.8,648.1 505.2,648.8 505.7,647.8 508.1,648.5 510.0,648.3 513.1,646.5 514.2,647.4 514.7,647.2 515.2,647.8 517.5,648.6 520.8,648.1 524.6,648.3 525.1,647.8 525.6,648.4 527.5,648.3 528.4,648.8 528.9,648.3 529.4,648.8 531.3,648.0 532.7,648.7 533.6,648.4 534.1,648.9 535.5,648.2 537.9,648.8 538.8,648.0 540.2,648.6 540.7,648.1 541.2,648.6 541.7,648.2 542.6,648.6 543.1,648.1 547.8,648.7 549.7,648.1 550.2,648.8 550.7,648.4 551.1,648.9 552.1,648.5 552.5,648.9 553.5,648.3 554.9,648.6 555.4,647.9 556.3,648.6 556.8,648.0 560.1,648.6 560.6,648.1 561.5,648.5 562.5,648.0 564.9,647.8 566.7,645.3 568.2,646.2 568.6,647.1 570.5,647.6 571.5,648.4 572.0,647.9 573.8,647.9 574.8,648.3 576.2,647.8 578.3,645.3 581.4,648.2 584.7,648.6 585.2,648.2 587.1,648.1 589.0,648.7 589.9,647.6 590.4,648.1 591.4,646.8 591.8,647.1 592.3,646.6 593.7,647.2 594.7,648.3 595.1,648.1 596.1,648.6 596.6,648.6 597.0,647.8 597.5,648.5 600.8,648.7 602.2,647.9 604.6,648.7 605.1,648.4 605.6,648.9 606.5,648.0 608.4,648.7 610.3,647.9 610.8,648.6 614.1,648.3 615.5,648.8 616.0,648.2 616.4,648.7 618.8,648.8 619.3,648.0 620.2,648.4 620.7,647.9 621.2,648.4 625.0,648.1 625.4,648.9 625.9,648.4 627.3,648.9 627.8,648.2 630.6,648.9 633.0,648.5 633.5,647.9 634.4,648.7 636.8,648.6 637.3,648.0 638.2,648.5 640.6,648.2 641.0,649.2 641.5,648.3 642.5,648.0 643.4,648.8 643.9,648.3 644.8,648.8 645.8,648.2 647.2,648.7 647.7,647.8 648.1,648.7 649.1,648.8 649.6,648.1 651.9,648.4 652.4,648.9 652.9,648.2 653.8,648.5 655.2,648.1 657.1,648.8 659.5,648.3 662.3,648.3 662.8,648.8 663.3,648.1 663.8,648.7 664.2,648.2 666.1,648.6 666.6,648.2 668.5,648.2 669.9,648.8 671.3,648.0 674.6,648.8 675.1,648.2 676.5,648.7 677.5,648.1 679.9,649.0 680.3,648.5 685.1,648.2 685.5,648.3 686.0,649.2 687.4,648.4 687.9,648.8 688.4,648.1 689.3,648.6 691.2,648.3 692.2,648.8 693.6,648.7 694.0,648.1 694.5,648.7 695.0,648.0 695.9,648.7 696.9,648.2 697.8,648.7 698.8,648.0 699.3,648.8 699.7,648.3 702.1,648.2 703.0,648.7 703.5,648.1 704.0,648.7 704.5,648.3 707.8,648.4 708.2,647.9 708.7,648.6 709.2,648.2 712.0,648.8 712.5,648.3 713.0,648.8 713.5,648.1 713.9,648.5 716.3,648.5 718.2,648.1 719.6,648.8 720.1,648.3 722.9,648.2 723.9,648.8 725.3,648.3 726.7,648.7 731.0,648.1 731.4,649.0 732.9,648.2 733.3,648.7 734.3,648.2 735.2,648.9 736.6,648.3 737.1,648.6 737.6,648.0 738.5,648.6 739.5,648.7 740.4,648.1 741.8,648.7 742.8,647.9 743.3,648.8 744.2,648.2 744.7,648.9 746.1,648.2 748.9,648.5 749.4,648.2 749.9,648.6 750.4,648.0 751.3,648.6 752.3,648.3 752.7,648.9 753.2,648.4 753.7,648.8 754.6,648.3 756.0,648.5 756.5,648.0 757.5,648.7 759.8,648.2 763.1,648.3 764.1,648.9 765.0,648.4 765.5,649.0 766.5,648.3 767.4,648.7 767.9,648.0 768.8,648.5 769.8,648.1 770.2,648.7 770.7,647.8 771.2,648.7 772.6,648.4 773.1,648.8 774.0,648.2 775.0,648.5 775.4,648.1 775.9,648.7 776.4,648.2 781.1,648.7 784.4,648.4 785.4,649.1 785.9,648.5 786.3,648.8 787.8,648.3 788.2,648.7 788.7,648.4 790.1,648.8 792.0,648.0 794.9,648.7 795.3,648.0 795.8,648.9 796.7,648.4 804.3,648.7 806.7,648.2 808.6,649.0 809.5,648.6 810.5,648.9 810.9,648.3 811.9,648.9 812.4,647.9 812.8,648.4 814.3,648.6 814.7,648.1 815.2,648.8 816.6,648.6 817.1,648.1 817.6,648.8 820.4,647.9 820.9,648.6 821.8,648.3 825.1,648.8 825.6,648.4 826.1,648.8 826.6,648.0 828.5,648.6 828.9,648.2 830.3,648.6 830.8,648.2 832.2,648.8 835.6,648.0 836.0,648.8 836.5,648.0 837.4,648.3 838.4,647.5 841.2,648.4 842.2,648.1 843.1,648.9 843.6,648.2 844.5,648.6 845.0,648.1 845.5,648.8 846.0,648.0 846.4,648.6 846.9,648.1 847.9,648.8 849.7,648.2 850.2,648.7 853.5,648.2 854.5,648.7 855.0,648.1 855.4,648.8 855.9,648.4 856.8,648.8 858.7,647.8 859.2,648.4 860.2,648.1 861.1,648.5 861.6,647.8 862.1,648.2 863.0,648.0 866.3,645.8 868.2,646.5 870.1,648.5 871.0,647.8 872.5,648.7 872.9,648.1 875.3,648.8 875.8,648.2 877.2,648.7 879.6,648.2 881.0,648.9 882.4,647.7 882.9,648.7 884.3,648.3 885.7,648.7 887.1,647.9 888.1,648.2 890.0,647.4 890.9,646.0 892.3,645.5 895.2,648.2 897.1,648.0 897.5,648.6 899.0,648.0 901.3,648.5 902.8,648.0 904.6,648.7 905.1,648.3 907.5,648.7 908.4,648.2 908.9,648.5 909.9,648.1 910.3,648.7 911.3,648.7 911.7,648.2 913.2,648.9 914.1,648.2 916.0,648.8 916.9,648.3 920.7,648.7 922.6,648.2 923.1,648.7 923.6,648.2 924.5,648.5 925.9,648.1 926.4,648.7 928.3,648.2 930.7,648.8 931.1,648.3 933.0,648.1 934.0,648.6 934.5,648.1 935.9,648.8 936.4,648.2 939.2,648.7 940.6,648.1 941.1,648.6 942.0,648.7 942.5,648.2 943.0,648.8 943.9,648.1 944.9,648.3 945.3,649.0 948.2,648.2 950.1,648.8 951.0,648.0 951.5,648.6 952.9,648.2 954.3,648.8 955.3,648.1 957.2,648.8 957.6,648.2 961.4,648.1 963.3,645.7 964.3,645.4 965.7,647.2 967.6,648.1 971.4,647.2 971.8,647.7 972.3,647.4 972.8,647.8 973.3,647.3 975.2,648.3 975.6,648.0 977.1,648.6 978.5,648.0 978.9,648.4 979.9,647.8 980.4,648.7 983.2,648.2 987.0,648.4 987.5,648.8 988.4,648.1 989.4,648.8 989.8,648.2 990.8,649.2 991.2,648.5 992.7,648.2 994.1,648.9 995.5,648.3 996.0,648.7 996.9,648.4 997.4,648.9 998.8,648.4 999.8,649.0 1000.2,648.5 1000.7,648.8 1001.2,648.3 1003.1,648.6 1004.0,648.2 1006.9,648.7 1009.2,648.2 1010.7,648.8 1011.6,648.2 1014.4,648.8 1015.4,648.3 1015.9,648.7 1016.3,648.1 1016.8,648.8 1017.3,648.4 1018.7,648.7 1021.1,648.1 1021.5,648.6 1023.0,648.5 1023.4,648.0 1023.9,649.0 1025.8,648.5 1026.3,647.6 1026.7,648.4 1027.2,648.1 1028.2,648.6 1029.1,648.1 1031.0,648.8 1032.4,648.4 1032.9,648.7 1034.8,648.3 1036.2,648.8 1037.2,648.4 1037.6,648.9 1038.1,648.4 1040.9,648.7 1041.9,647.9 1042.4,649.0 1043.8,648.3 1044.7,649.1 1045.2,648.2 1045.7,648.8 1046.6,648.8 1048.0,648.3 1053.7,648.7 1054.2,648.1 1054.7,648.6 1056.1,648.2 1056.6,649.0 1057.0,648.0 1058.0,648.8 1058.9,648.0 1059.9,648.8 1060.8,648.2 1061.3,648.8 1062.2,648.6 1062.7,648.0 1063.2,648.6 1063.7,648.2 1064.6,648.7 1065.1,648.3 1066.0,648.9 1066.5,648.4 1073.1,648.7 1074.1,648.1 1075.0,648.8 1075.5,648.2 1076.8,648.5"/>
<g fill="#f4f4f4">
<rect x="0" y="603" width="5" height="1"/><rect x="0" y="627" width="5" height="1"/><rect x="0" y="674" width="5" height="1"/><rect x="0" y="697" width="5" height="1"/>
</g>
<g fill="#f0f0f0" font-family="Liberation Sans" font-size="11px">
<text x="5" y="607">2000</text><text x="5" y="631">1000</text><text x="5" y="678">-1000</text><text x="5" y="701">-2000</text>
<text x="1101" y="608.5" font-size="10px">×</text><text x="1126.5" y="610" text-anchor="end" font-size="14px">0.5</text>
</g>
</svg>
<!-- vertical separators -->
<div class="a" style="left:1128px;top:102px;width:4px;height:720px;background:#f8f8f8"></div>
<div class="a" style="left:1132px;top:102px;width:1px;height:720px;background:#c4c4c1"></div>

<!-- right notebook -->
<div class="a" style="left:1136px;top:134px;width:368px;height:508px;border:1px solid #bfbfbc;background:#fff"></div>
<div class="a" style="left:1141px;top:135px;width:358px;height:505px;background:#e8e8e7"></div>
<!-- tabs -->
<div class="a" style="left:1136px;top:102px;width:47px;height:33px;background:#fff;border:1px solid #bfbfbc;border-bottom:none;border-radius:4px 4px 0 0"></div>
<div class="a" style="left:1183px;top:104px;width:72px;height:30px;background:#ededec;border:1px solid #c3c3c0;border-bottom:none;border-left:none;border-radius:0 4px 0 0"></div>
<div class="a" style="left:1255px;top:104px;width:70px;height:30px;background:#ededec;border:1px solid #c3c3c0;border-bottom:none;border-left:none;border-radius:0 4px 0 0"></div>
<div class="t" style="left:1148px;top:112px;font-size:14px;transform:scaleX(0.8954);transform-origin:0 0">data</div>
<div class="t" style="left:1190px;top:112px;font-size:14px;transform:scaleX(0.9760);transform-origin:0 0">functions</div>
<div class="t" style="left:1262px;top:112px;font-size:14px;transform:scaleX(0.9281);transform-origin:0 0">variables</div>
<!-- list -->
<div class="a" style="left:1141px;top:136px;width:358px;height:298px;background:#fff;border:1px solid #d8d8d5;border-top-color:#d0d0cd"></div>
<div class="a" style="left:1142px;top:137px;width:355px;height:24px;border-bottom:1px solid #e3e3e0"></div>
<div class="a" style="left:1181px;top:137px;width:1px;height:24px;background:#e8e8e6"></div>
<div class="a" style="left:1222px;top:137px;width:1px;height:24px;background:#e8e8e6"></div>
<div class="a" style="left:1324px;top:137px;width:1px;height:24px;background:#e8e8e6"></div>
<div class="a" style="left:1497px;top:137px;width:1px;height:296px;background:#e0e0de"></div>
<div class="t" style="left:1149px;top:142px;font-size:14px;transform:scaleX(0.9829);transform-origin:0 0">No</div>
<div class="t" style="left:1189px;top:142px;font-size:13px;letter-spacing:-0.6px">#F+#</div>
<div class="t" style="left:1230px;top:142px;font-size:14px;transform:scaleX(0.9101);transform-origin:0 0">Name</div>
<!-- rows -->
<div class="a" style="left:1142px;top:162px;width:183px;height:73px;background:#4a90d9"></div>
<div class="a" style="left:1142px;top:186px;width:355px;height:1px;background:#e6e6e4"></div>
<div class="a" style="left:1142px;top:210px;width:355px;height:1px;background:#e6e6e4"></div>
<div class="a" style="left:1142px;top:235px;width:355px;height:1px;background:#e6e6e4"></div>
<div class="a" style="left:1142px;top:186px;width:183px;height:1px;background:#a6c8ec"></div>
<div class="a" style="left:1142px;top:210px;width:183px;height:1px;background:#b5b5b5"></div>
<div class="a" style="left:1181px;top:162px;width:1px;height:73px;background:#b9d4f0"></div>
<div class="a" style="left:1222px;top:162px;width:1px;height:73px;background:#b9d4f0"></div>
<div class="a" style="left:1145px;top:166px;width:15px;height:15px;background:#00ff00;border:2px solid #2a1e1e"></div>
<div class="a" style="left:1145px;top:190px;width:15px;height:15px;background:#00ccff;border:2px solid #2a1e1e"></div>
<div class="a" style="left:1145px;top:215px;width:15px;height:15px;background:#7700ff;border:2px solid #2a1e1e"></div>
<div class="t" style="left:1164.5px;top:167px;font-size:14px;color:#fff">0</div>
<div class="t" style="left:1164.5px;top:191px;font-size:14px;color:#fff">1</div>
<div class="t" style="left:1164.5px;top:216px;font-size:14px;color:#fff">2</div>
<div class="t" style="left:1185px;top:167px;font-size:14px;color:#fff">0+0</div>
<div class="t" style="left:1185px;top:191px;font-size:14px;color:#fff">0+0</div>
<div class="t" style="left:1185px;top:216px;font-size:14px;color:#fff">0+0</div>
<div class="t" style="left:1226px;top:167px;font-size:14px;color:#fff">Q738</div>
<div class="t" style="left:1226px;top:191px;font-size:14px;color:#fff">R151</div>
<div class="t" style="left:1226px;top:216px;font-size:14px;color:#fff">R152</div>
<!-- sash -->
<div class="a" style="left:1141px;top:439px;width:358px;height:1px;background:#c9c9c6"></div>
<!-- info -->
<div class="a" style="left:1141px;top:443px;width:357px;height:91px;background:#fff;border:1px solid #bdbdba"></div>
<div class="t" style="left:1143.5px;top:447px;font-size:14px;color:#1c1c1c;transform:scaleX(0.9571);transform-origin:0 0">@2: 2267 points, 2267 active.</div>
<div class="t" style="left:1143.5px;top:466px;font-size:14px;color:#1c1c1c;transform:scaleX(0.9868);transform-origin:0 0">Filename: /home/aleplo/test/Documents/Chem/Master/</div>
<div class="t" style="left:1143.5px;top:484.5px;font-size:14px;color:#1c1c1c;transform:scaleX(0.9557);transform-origin:0 0">Data/MoS2-templating/PXRD/R152.raw</div>
<div class="t" style="left:1143.5px;top:503px;font-size:14px;color:#1c1c1c;transform:scaleX(0.9534);transform-origin:0 0">Data title: R152</div>
<!-- combo -->
<div class="a" style="left:1142px;top:537px;width:356px;height:30px;background:linear-gradient(#ebebea,#dcdcda);border:1px solid #b6b6b3;border-radius:4px"></div>
<div class="t" style="left:1150.7px;top:544px;font-size:14.2px;color:#2e3436;transform:scaleX(0.9702);transform-origin:0 0">show only selected</div>
<div class="a" style="left:1477px;top:549px;width:0;height:0;border-left:5px solid transparent;border-right:5px solid transparent;border-top:5px solid #2e3436"></div>
<!-- spin row -->
<div class="a" style="left:1155px;top:569px;width:38px;height:35px;background:#fff"></div><div class="a" style="left:1156px;top:570px;width:36px;height:33px;background:#fff;border:1px solid #c4c4c1;border-radius:4px"></div>
<div class="a" style="left:1176px;top:571px;width:1px;height:31px;background:#e6e6e4"></div>
<div class="t" style="left:1165px;top:578px;font-size:14.5px;color:#1c1c1c">2</div>
<div class="a" style="left:1180px;top:575px;width:0;height:0;border-left:4px solid transparent;border-right:4px solid transparent;border-bottom:5px solid #2e3436"></div>
<div class="a" style="left:1180px;top:591px;width:0;height:0;border-left:4px solid transparent;border-right:4px solid transparent;border-top:5px solid #2e3436"></div>
<svg class="a" style="left:1145px;top:578px" width="12" height="16" viewBox="0 0 12 16"><circle cx="3" cy="3" r="1.5" fill="#111"/><circle cx="7.5" cy="4" r="1.7" fill="#111"/><circle cx="2.5" cy="8" r="1.8" fill="#111"/><circle cx="6.5" cy="10.5" r="3" fill="#111"/></svg>
<div class="a" style="left:1200px;top:579px;width:15px;height:14px;background:#f0f0ef;border:1px solid #a9a9a6;border-radius:3px"></div>
<svg class="a" style="left:1200px;top:578px" width="16" height="16" viewBox="0 0 16 16"><path d="M3.2 8 L6.6 11.6 L13.2 3.6" fill="none" stroke="#1c1c1c" stroke-width="2.8"/></svg>
<div class="a" style="left:1218px;top:575px;width:26px;height:22px;background:#dfdfde;border:1px solid #d0d0ce;border-radius:3px"></div>
<div class="t" style="left:1221px;top:579px;font-size:14px;color:#3a3a3a">line</div>
<div class="a" style="left:1250px;top:579px;width:15px;height:14px;background:#f0f0ef;border:1px solid #a9a9a6;border-radius:3px"></div>
<div class="t" style="left:1271px;top:578px;font-size:15px;color:#2e3436">σ</div>
<!-- right spin -->
<svg class="a" style="left:1441px;top:578px" width="14" height="16" viewBox="0 0 14 16"><rect x="1" y="1" width="10" height="2" fill="#22ee22"/><rect x="1" y="11" width="10" height="2" fill="#22ee22"/><path d="M6 2 L6 14 M3.5 5 L6 2 L8.5 5 M3.5 11.5 L6 14 L8.5 11.5" stroke="#111" stroke-width="1.6" fill="none"/></svg>
<div class="a" style="left:1452px;top:569px;width:47px;height:35px;background:#fff"></div><div class="a" style="left:1453px;top:570px;width:45px;height:33px;background:#fff;border:1px solid #c4c4c1;border-radius:4px"></div>
<div class="a" style="left:1482px;top:571px;width:15px;height:31px;background:#f4f4f4;border-left:1px solid #e6e6e4"></div>
<div class="t" style="left:1462px;top:579px;font-size:14px;color:#1c1c1c">0</div>
<div class="a" style="left:1486px;top:575px;width:0;height:0;border-left:4px solid transparent;border-right:4px solid transparent;border-bottom:5px solid #2e3436"></div>
<div class="a" style="left:1486px;top:591px;width:0;height:0;border-left:4px solid transparent;border-right:4px solid transparent;border-top:5px solid #8a8a8a"></div>
<!-- buttons -->
<div class="a" style="left:1142px;top:605px;width:36px;height:35px;background:linear-gradient(#ebebea,#d9d9d7);border:1px solid #b6b6b3;border-radius:4px"></div>
<div class="a" style="left:1180px;top:605px;width:35px;height:35px;background:linear-gradient(#ebebea,#d9d9d7);border:1px solid #b6b6b3;border-radius:4px"></div>
<div class="a" style="left:1217px;top:605px;width:36px;height:35px;background:#efefee;border:1px solid #cfcfcc;border-radius:4px"></div>
<div class="a" style="left:1255px;top:605px;width:36px;height:35px;background:#efefee;border:1px solid #cfcfcc;border-radius:4px"></div>
<div class="a" style="left:1293px;top:605px;width:35px;height:35px;background:linear-gradient(#ebebea,#d9d9d7);border:1px solid #b6b6b3;border-radius:4px"></div>
<div class="a" style="left:1136px;top:647px;width:368px;height:1px;background:#c9c9c6"></div>

<!-- status bar -->
<div class="a" style="left:1068px;top:824px;width:1px;height:19px;background:#bdbdbd"></div>
<div class="a" style="left:1314px;top:822px;width:176px;height:1px;background:#d6d6d3"></div>
<div class="a" style="left:1288px;top:823px;width:26px;height:22px;background:linear-gradient(#efefee,#dcdcda);border:1px solid #b9b9b6;border-radius:3px"></div>
<svg class="a" style="left:1293px;top:827px" width="16" height="14" viewBox="0 0 16 14"><g fill="none" stroke="#222" stroke-width="1"><rect x="1.5" y="2" width="3" height="3"/><path d="M3 5 V10"/><rect x="5.5" y="7" width="3" height="3"/><rect x="9.5" y="4" width="4" height="5" rx="2"/></g></svg>
<div class="t" style="left:1360px;top:827px;font-size:14px;color:#2e3436;transform:scaleX(0.9143);transform-origin:0 0">zoom</div>
<svg class="a" style="left:1395px;top:824px" width="14" height="20" viewBox="0 0 14 20"><path d="M3 4 Q6 1 8 4" fill="none" stroke="#555" stroke-width="1"/><rect x="3" y="6" width="9" height="12" rx="4" fill="#f4f4f4" stroke="#333" stroke-width="1"/><rect x="6.5" y="8" width="2" height="3" fill="#6aaae0"/></svg>
<div class="t" style="left:1411.6px;top:827px;font-size:14px;color:#2e3436;transform:scaleX(0.9249);transform-origin:0 0">menu</div>
<!-- input spin arrows -->
<div class="a" style="left:1114px;top:797px;width:0;height:0;border-left:4.5px solid transparent;border-right:4.5px solid transparent;border-bottom:4.5px solid #888"></div>
<div class="a" style="left:1114px;top:812px;width:0;height:0;border-left:4.5px solid transparent;border-right:4.5px solid transparent;border-top:4.5px solid #888"></div>
<div class="a" style="left:1112px;top:805px;width:14px;height:1px;background:#e2e2e0"></div>
<!-- panel button icons -->
<svg class="a" style="left:1149px;top:611px" width="22" height="23" viewBox="0 0 22 23"><rect x="0.5" y="0.5" width="21" height="22" fill="#111"/>
<rect x="2" y="2" width="5" height="5" fill="#f4a8a0"/><rect x="8.5" y="2" width="5" height="5" fill="#6a8ae8"/><rect x="15" y="2" width="5" height="5" fill="#f0e090"/>
<rect x="2" y="8.5" width="5" height="5.5" fill="#f0d8c0"/><rect x="8.5" y="8.5" width="5" height="5.5" fill="#d8e0f0"/><rect x="15" y="8.5" width="5" height="5.5" fill="#f0d0a0"/>
<rect x="2" y="15.5" width="5" height="5.5" fill="#f8c8c8"/><rect x="8.5" y="15.5" width="5" height="5.5" fill="#58c058"/><rect x="15" y="15.5" width="5" height="5.5" fill="#6a8ae8"/>
<path d="M9.5 19 V8 Q9.5 6.5 11 6.5 Q12.5 6.5 12.5 8 V12 L16 12.5 Q17.5 13 17 16 L16.5 19 Z" fill="#e8dcc8" stroke="#333" stroke-width="0.8"/></svg>
<div class="t" style="left:1188px;top:612px;font-size:23px;font-weight:bold;color:#111">&#x3A3;</div>
<svg class="a" style="left:1222px;top:610px" width="26" height="26" viewBox="0 0 26 26"><g stroke="#222" stroke-width="1"><path d="M2.5 4 L6 2.5 L10 3 L13 4 V16 L9 15.5 L5 16 L2.5 16.5 Z" fill="#c0c4bc"/><path d="M13.5 10 L16 8.5 L19.5 9.5 L23.5 8.5 V21.5 L20 22.5 L16.5 22 L13.5 21 Z" fill="#a8acaa"/></g><g stroke="#555" stroke-width="0.6"><path d="M4.5 5 V15 M7 4.5 V15 M9.5 4.5 V15 M15.5 11 V21 M18 10.5 V21.5 M20.5 10.5 V21.5"/></g><path d="M7 7 L13.5 14" stroke="#5a9a5a" stroke-width="2.2"/><path d="M11 15 L15 15.5 L14 11.5 Z" fill="#5a9a5a"/></svg>
<svg class="a" style="left:1261px;top:613px" width="25" height="20" viewBox="0 0 25 20"><rect x="1" y="3.5" width="23" height="12.5" fill="#fff" stroke="#333" stroke-width="1" stroke-dasharray="1 0.8"/><path d="M3.5 6 H6 M4.75 6 V14 M3.5 14 H6" stroke="#222" stroke-width="0.8"/><text x="6.5" y="13.6" font-family="Liberation Sans" font-size="9" fill="#333" textLength="16" lengthAdjust="spacingAndGlyphs">nam</text></svg>
<svg class="a" style="left:1302px;top:614px" width="16" height="16" viewBox="0 0 16 16"><path d="M3 3 L13 13 M13 3 L3 13" stroke="#111" stroke-width="2.8"/></svg>

</body></html>
